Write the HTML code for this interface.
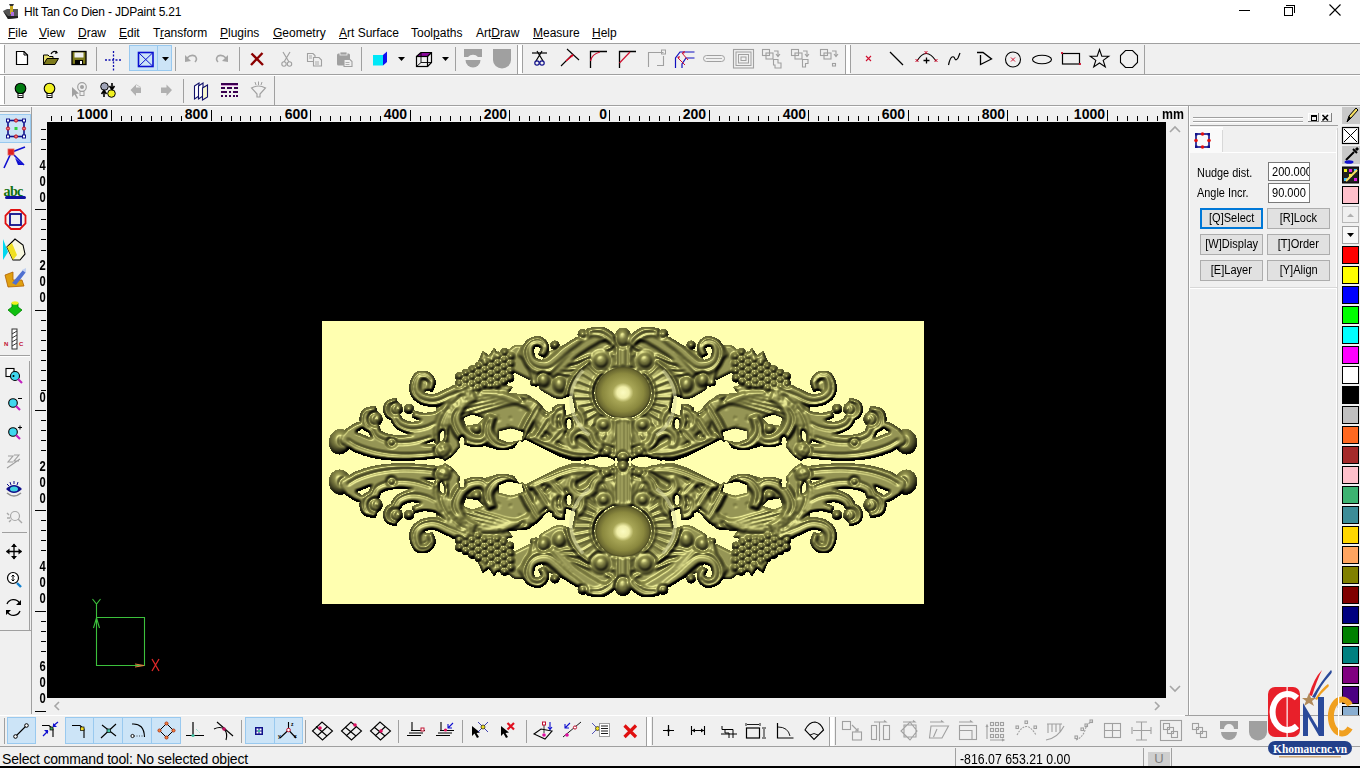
<!DOCTYPE html>
<html><head><meta charset="utf-8">
<style>
*{margin:0;padding:0;box-sizing:border-box}
html,body{width:1360px;height:768px;overflow:hidden;background:#f0f0f0;font-family:"Liberation Sans",sans-serif;font-size:12px;color:#000;position:relative}
.a{position:absolute}
#menu span{position:absolute;top:4px;font-size:12px;line-height:14px;color:#000}
#menu u{text-decoration:underline}
.hi{position:absolute;background:#cce4f7;border:1px solid #99c9ef}
.vs{position:absolute;width:1px;background:#a0a0a0}
.hl{position:absolute;height:1px;background:#a0a0a0}
.wl{position:absolute;height:1px;background:#fff}
svg{position:absolute;overflow:visible}
.rl{position:absolute;font-weight:bold;font-size:14px;line-height:14px;font-family:"Liberation Sans",sans-serif}
.btn{position:absolute;background:#e1e1e1;border:1px solid #adadad;font-size:12px;text-align:center;line-height:18px;color:#000}
.sw{position:absolute;left:1342px;width:17px;height:18px;border:1px solid #000}
</style></head><body>
<!-- title -->
<div class="a" style="left:0;top:0;width:1360px;height:43px;background:#fff"></div>
<svg style="left:2px;top:3px" width="17" height="17" viewBox="0 0 17 17">
 <path d="M1 8 L5 6 L16 6 L16 15 L6 16 Z" fill="#555"/>
 <path d="M1 8 L6 13 L16 13 L16 15 L6 16 Z" fill="#222"/>
 <rect x="8" y="1" width="3" height="10" fill="#c8a820"/>
 <path d="M7 1 L12 1 L11 3 L8 3Z" fill="#333"/>
 <rect x="9" y="9" width="3" height="4" fill="#b070e0"/>
</svg>
<div class="a" style="left:24px;top:5px;font-size:12px;line-height:14px;color:#000;letter-spacing:-0.2px;white-space:nowrap">Hlt Tan Co Dien - JDPaint 5.21</div>
<div class="a" style="left:1239px;top:10px;width:11px;height:1px;background:#000"></div>
<div class="a" style="left:1286px;top:5px;width:9px;height:8px;border:1px solid #000;border-left:none;border-bottom:none"></div>
<div class="a" style="left:1284px;top:7px;width:9px;height:9px;border:1px solid #000;background:#fff"></div>
<svg style="left:1329px;top:4px" width="12" height="12"><path d="M0.5 0.5L11.5 11.5M11.5 0.5L0.5 11.5" stroke="#000" stroke-width="1.1"/></svg>
<div id="menu" class="a" style="left:0;top:22px;width:1360px;height:21px">
  <span style="left:8px"><u>F</u>ile</span>
  <span style="left:39px"><u>V</u>iew</span>
  <span style="left:78px"><u>D</u>raw</span>
  <span style="left:119px"><u>E</u>dit</span>
  <span style="left:153px">T<u>r</u>ansform</span>
  <span style="left:220px"><u>P</u>lugins</span>
  <span style="left:273px"><u>G</u>eometry</span>
  <span style="left:339px"><u>A</u>rt Surface</span>
  <span style="left:411px">Tool<u>p</u>aths</span>
  <span style="left:476px">Art<u>D</u>raw</span>
  <span style="left:533px"><u>M</u>easure</span>
  <span style="left:592px"><u>H</u>elp</span>
</div>
<div class="hl" style="left:0;top:43px;width:1360px"></div>
<!-- toolbar row borders -->
<div class="hl" style="left:0;top:74px;width:1360px"></div>
<div class="wl" style="left:0;top:75px;width:1360px"></div>
<div class="hl" style="left:0;top:105px;width:1188px"></div>
<div class="hl" style="left:1188px;top:105px;width:172px"></div>
<div class="wl" style="left:0;top:106px;width:1188px"></div>
<!-- toolbar grippers -->
<div class="a" style="left:0;top:44px;width:4px;height:30px;background:#fff"></div>
<div class="vs" style="left:4px;top:45px;height:28px"></div>
<div class="a" style="left:0;top:76px;width:4px;height:29px;background:#fff"></div>
<div class="vs" style="left:4px;top:76px;height:28px"></div>
<!-- canvas area -->
<div class="a" style="left:47px;top:122px;width:1119px;height:576px;background:#000"></div>
<svg style="left:0;top:0" width="1360" height="768" viewBox="0 0 1360 768">
<g fill="none" stroke="#3cc03c" stroke-width="1.1">
<path d="M96.5 605 V665.5 H144.5 V617.5 H96.5"/>
<path d="M92.5 599 L96.5 604 L100.5 599 M96.5 604 V606"/>
<path d="M93.5 628 L96.5 618 L99.5 628"/>
</g>
<path d="M135 664 L144 665.5 L135 667" fill="none" stroke="#e08040" stroke-width="1"/>
<path d="M152 659 L159 671 M159 659 L152 671" stroke="#e02828" stroke-width="1.3"/>
</svg>
<!-- scrollbars -->
<div class="a" style="left:47px;top:698px;width:1136px;height:17px;background:#f0f0f0"></div>
<svg style="left:52px;top:701px" width="10" height="10"><path d="M7 1 L3 5 L7 9" stroke="#a6a6a6" stroke-width="1.6" fill="none"/></svg>
<svg style="left:1152px;top:701px" width="10" height="10"><path d="M3 1 L7 5 L3 9" stroke="#a6a6a6" stroke-width="1.6" fill="none"/></svg>
<svg style="left:1169px;top:125px" width="12" height="10"><path d="M1 7 L6 2 L11 7" stroke="#a6a6a6" stroke-width="1.6" fill="none"/></svg>
<svg style="left:1169px;top:683px" width="12" height="10"><path d="M1 3 L6 8 L11 3" stroke="#a6a6a6" stroke-width="1.6" fill="none"/></svg>
<!-- left toolbar frame -->
<div class="vs" style="left:31px;top:107px;height:607px"></div>
<div class="vs" style="left:29px;top:361px;height:269px"></div>
<div class="hl" style="left:0;top:111px;width:30px"></div>
<div class="hl" style="left:0;top:355px;width:30px"></div>
<div class="wl" style="left:0;top:356px;width:30px"></div>
<div class="hl" style="left:0;top:630px;width:31px"></div>
<!-- bottom toolbar borders -->
<div class="wl" style="left:0;top:715px;width:1360px"></div>
<div class="hl" style="left:0;top:746px;width:1360px"></div>
<div class="vs" style="left:4px;top:718px;height:26px"></div>
<!-- status bar -->
<div class="a" style="left:2px;top:751px;font-size:14px;line-height:16px;letter-spacing:-0.2px;white-space:nowrap">Select command tool: No selected object</div>
<div class="vs" style="left:955px;top:748px;height:18px"></div>
<div class="a" style="left:960px;top:751px;font-size:14px;line-height:16px;white-space:nowrap;transform:scaleX(0.88);transform-origin:0 0">-816.07 653.21 0.00</div>
<div class="vs" style="left:1143px;top:748px;height:18px"></div>
<div class="a" style="left:1148px;top:752px;width:22px;height:14px;background:#cfcfcf;color:#808080;font-size:13px;line-height:14px;text-align:center">U</div>
<div class="vs" style="left:1171px;top:748px;height:18px"></div>
<div class="a" style="left:0;top:766px;width:1360px;height:2px;background:#000"></div>
<div class="a" style="left:51px;top:116px;width:1px;height:5px;background:#000"></div>
<div class="a" style="left:61px;top:116px;width:1px;height:5px;background:#000"></div>
<div class="a" style="left:71px;top:116px;width:1px;height:5px;background:#000"></div>
<div class="a" style="left:111px;top:110px;width:1px;height:11px;background:#000"></div>
<div class="a" style="left:121px;top:116px;width:1px;height:5px;background:#000"></div>
<div class="a" style="left:131px;top:116px;width:1px;height:5px;background:#000"></div>
<div class="a" style="left:141px;top:116px;width:1px;height:5px;background:#000"></div>
<div class="a" style="left:151px;top:116px;width:1px;height:5px;background:#000"></div>
<div class="a" style="left:161px;top:116px;width:1px;height:5px;background:#000"></div>
<div class="a" style="left:171px;top:116px;width:1px;height:5px;background:#000"></div>
<div class="a" style="left:181px;top:116px;width:1px;height:5px;background:#000"></div>
<div class="a" style="left:211px;top:110px;width:1px;height:11px;background:#000"></div>
<div class="a" style="left:221px;top:116px;width:1px;height:5px;background:#000"></div>
<div class="a" style="left:231px;top:116px;width:1px;height:5px;background:#000"></div>
<div class="a" style="left:240px;top:116px;width:1px;height:5px;background:#000"></div>
<div class="a" style="left:250px;top:116px;width:1px;height:5px;background:#000"></div>
<div class="a" style="left:260px;top:116px;width:1px;height:5px;background:#000"></div>
<div class="a" style="left:270px;top:116px;width:1px;height:5px;background:#000"></div>
<div class="a" style="left:280px;top:116px;width:1px;height:5px;background:#000"></div>
<div class="a" style="left:310px;top:110px;width:1px;height:11px;background:#000"></div>
<div class="a" style="left:320px;top:116px;width:1px;height:5px;background:#000"></div>
<div class="a" style="left:330px;top:116px;width:1px;height:5px;background:#000"></div>
<div class="a" style="left:340px;top:116px;width:1px;height:5px;background:#000"></div>
<div class="a" style="left:350px;top:116px;width:1px;height:5px;background:#000"></div>
<div class="a" style="left:360px;top:116px;width:1px;height:5px;background:#000"></div>
<div class="a" style="left:370px;top:116px;width:1px;height:5px;background:#000"></div>
<div class="a" style="left:380px;top:116px;width:1px;height:5px;background:#000"></div>
<div class="a" style="left:410px;top:110px;width:1px;height:11px;background:#000"></div>
<div class="a" style="left:420px;top:116px;width:1px;height:5px;background:#000"></div>
<div class="a" style="left:430px;top:116px;width:1px;height:5px;background:#000"></div>
<div class="a" style="left:440px;top:116px;width:1px;height:5px;background:#000"></div>
<div class="a" style="left:450px;top:116px;width:1px;height:5px;background:#000"></div>
<div class="a" style="left:460px;top:116px;width:1px;height:5px;background:#000"></div>
<div class="a" style="left:470px;top:116px;width:1px;height:5px;background:#000"></div>
<div class="a" style="left:480px;top:116px;width:1px;height:5px;background:#000"></div>
<div class="a" style="left:509px;top:110px;width:1px;height:11px;background:#000"></div>
<div class="a" style="left:519px;top:116px;width:1px;height:5px;background:#000"></div>
<div class="a" style="left:529px;top:116px;width:1px;height:5px;background:#000"></div>
<div class="a" style="left:539px;top:116px;width:1px;height:5px;background:#000"></div>
<div class="a" style="left:549px;top:116px;width:1px;height:5px;background:#000"></div>
<div class="a" style="left:559px;top:116px;width:1px;height:5px;background:#000"></div>
<div class="a" style="left:569px;top:116px;width:1px;height:5px;background:#000"></div>
<div class="a" style="left:579px;top:116px;width:1px;height:5px;background:#000"></div>
<div class="a" style="left:589px;top:116px;width:1px;height:5px;background:#000"></div>
<div class="a" style="left:609px;top:110px;width:1px;height:11px;background:#000"></div>
<div class="a" style="left:619px;top:116px;width:1px;height:5px;background:#000"></div>
<div class="a" style="left:629px;top:116px;width:1px;height:5px;background:#000"></div>
<div class="a" style="left:639px;top:116px;width:1px;height:5px;background:#000"></div>
<div class="a" style="left:649px;top:116px;width:1px;height:5px;background:#000"></div>
<div class="a" style="left:659px;top:116px;width:1px;height:5px;background:#000"></div>
<div class="a" style="left:669px;top:116px;width:1px;height:5px;background:#000"></div>
<div class="a" style="left:679px;top:116px;width:1px;height:5px;background:#000"></div>
<div class="a" style="left:709px;top:110px;width:1px;height:11px;background:#000"></div>
<div class="a" style="left:719px;top:116px;width:1px;height:5px;background:#000"></div>
<div class="a" style="left:729px;top:116px;width:1px;height:5px;background:#000"></div>
<div class="a" style="left:738px;top:116px;width:1px;height:5px;background:#000"></div>
<div class="a" style="left:748px;top:116px;width:1px;height:5px;background:#000"></div>
<div class="a" style="left:758px;top:116px;width:1px;height:5px;background:#000"></div>
<div class="a" style="left:768px;top:116px;width:1px;height:5px;background:#000"></div>
<div class="a" style="left:778px;top:116px;width:1px;height:5px;background:#000"></div>
<div class="a" style="left:808px;top:110px;width:1px;height:11px;background:#000"></div>
<div class="a" style="left:818px;top:116px;width:1px;height:5px;background:#000"></div>
<div class="a" style="left:828px;top:116px;width:1px;height:5px;background:#000"></div>
<div class="a" style="left:838px;top:116px;width:1px;height:5px;background:#000"></div>
<div class="a" style="left:848px;top:116px;width:1px;height:5px;background:#000"></div>
<div class="a" style="left:858px;top:116px;width:1px;height:5px;background:#000"></div>
<div class="a" style="left:868px;top:116px;width:1px;height:5px;background:#000"></div>
<div class="a" style="left:878px;top:116px;width:1px;height:5px;background:#000"></div>
<div class="a" style="left:908px;top:110px;width:1px;height:11px;background:#000"></div>
<div class="a" style="left:918px;top:116px;width:1px;height:5px;background:#000"></div>
<div class="a" style="left:928px;top:116px;width:1px;height:5px;background:#000"></div>
<div class="a" style="left:938px;top:116px;width:1px;height:5px;background:#000"></div>
<div class="a" style="left:948px;top:116px;width:1px;height:5px;background:#000"></div>
<div class="a" style="left:958px;top:116px;width:1px;height:5px;background:#000"></div>
<div class="a" style="left:968px;top:116px;width:1px;height:5px;background:#000"></div>
<div class="a" style="left:978px;top:116px;width:1px;height:5px;background:#000"></div>
<div class="a" style="left:1007px;top:110px;width:1px;height:11px;background:#000"></div>
<div class="a" style="left:1017px;top:116px;width:1px;height:5px;background:#000"></div>
<div class="a" style="left:1027px;top:116px;width:1px;height:5px;background:#000"></div>
<div class="a" style="left:1037px;top:116px;width:1px;height:5px;background:#000"></div>
<div class="a" style="left:1047px;top:116px;width:1px;height:5px;background:#000"></div>
<div class="a" style="left:1057px;top:116px;width:1px;height:5px;background:#000"></div>
<div class="a" style="left:1067px;top:116px;width:1px;height:5px;background:#000"></div>
<div class="a" style="left:1107px;top:110px;width:1px;height:11px;background:#000"></div>
<div class="a" style="left:1117px;top:116px;width:1px;height:5px;background:#000"></div>
<div class="a" style="left:1127px;top:116px;width:1px;height:5px;background:#000"></div>
<div class="a" style="left:1137px;top:116px;width:1px;height:5px;background:#000"></div>
<div class="a" style="left:1147px;top:116px;width:1px;height:5px;background:#000"></div>
<div class="a" style="left:1157px;top:116px;width:1px;height:5px;background:#000"></div>
<div class="rl" style="right:1252px;top:107px">1000</div>
<div class="rl" style="right:1152px;top:107px">800</div>
<div class="rl" style="right:1052px;top:107px">600</div>
<div class="rl" style="right:953px;top:107px">400</div>
<div class="rl" style="right:853px;top:107px">200</div>
<div class="rl" style="right:753px;top:107px">0</div>
<div class="rl" style="right:654px;top:107px">200</div>
<div class="rl" style="right:554px;top:107px">400</div>
<div class="rl" style="right:455px;top:107px">600</div>
<div class="rl" style="right:355px;top:107px">800</div>
<div class="rl" style="right:255px;top:107px">1000</div>
<div class="rl" style="left:1162px;top:107px;transform:scaleX(0.88);transform-origin:0 0">mm</div><div class="a" style="left:41px;top:129px;width:5px;height:1px;background:#000"></div>
<div class="a" style="left:41px;top:139px;width:5px;height:1px;background:#000"></div>
<div class="a" style="left:41px;top:149px;width:5px;height:1px;background:#000"></div>
<div class="a" style="left:35px;top:209px;width:11px;height:1px;background:#000"></div>
<div class="a" style="left:41px;top:219px;width:5px;height:1px;background:#000"></div>
<div class="a" style="left:41px;top:229px;width:5px;height:1px;background:#000"></div>
<div class="a" style="left:41px;top:239px;width:5px;height:1px;background:#000"></div>
<div class="a" style="left:41px;top:250px;width:5px;height:1px;background:#000"></div>
<div class="a" style="left:35px;top:310px;width:11px;height:1px;background:#000"></div>
<div class="a" style="left:41px;top:320px;width:5px;height:1px;background:#000"></div>
<div class="a" style="left:41px;top:330px;width:5px;height:1px;background:#000"></div>
<div class="a" style="left:41px;top:340px;width:5px;height:1px;background:#000"></div>
<div class="a" style="left:41px;top:350px;width:5px;height:1px;background:#000"></div>
<div class="a" style="left:41px;top:360px;width:5px;height:1px;background:#000"></div>
<div class="a" style="left:41px;top:370px;width:5px;height:1px;background:#000"></div>
<div class="a" style="left:41px;top:380px;width:5px;height:1px;background:#000"></div>
<div class="a" style="left:41px;top:390px;width:5px;height:1px;background:#000"></div>
<div class="a" style="left:35px;top:410px;width:11px;height:1px;background:#000"></div>
<div class="a" style="left:41px;top:420px;width:5px;height:1px;background:#000"></div>
<div class="a" style="left:41px;top:430px;width:5px;height:1px;background:#000"></div>
<div class="a" style="left:41px;top:440px;width:5px;height:1px;background:#000"></div>
<div class="a" style="left:41px;top:450px;width:5px;height:1px;background:#000"></div>
<div class="a" style="left:35px;top:510px;width:11px;height:1px;background:#000"></div>
<div class="a" style="left:41px;top:520px;width:5px;height:1px;background:#000"></div>
<div class="a" style="left:41px;top:530px;width:5px;height:1px;background:#000"></div>
<div class="a" style="left:41px;top:540px;width:5px;height:1px;background:#000"></div>
<div class="a" style="left:41px;top:550px;width:5px;height:1px;background:#000"></div>
<div class="a" style="left:35px;top:611px;width:11px;height:1px;background:#000"></div>
<div class="a" style="left:41px;top:621px;width:5px;height:1px;background:#000"></div>
<div class="a" style="left:41px;top:631px;width:5px;height:1px;background:#000"></div>
<div class="a" style="left:41px;top:641px;width:5px;height:1px;background:#000"></div>
<div class="a" style="left:41px;top:651px;width:5px;height:1px;background:#000"></div>
<div class="a" style="left:35px;top:711px;width:11px;height:1px;background:#000"></div>
<div class="rl" style="left:38px;top:158px;transform:scaleX(0.8);transform-origin:7.5px 0">4</div>
<div class="rl" style="left:38px;top:174px;transform:scaleX(0.8);transform-origin:7.5px 0">0</div>
<div class="rl" style="left:38px;top:190px;transform:scaleX(0.8);transform-origin:7.5px 0">0</div>
<div class="rl" style="left:38px;top:258px;transform:scaleX(0.8);transform-origin:7.5px 0">2</div>
<div class="rl" style="left:38px;top:274px;transform:scaleX(0.8);transform-origin:7.5px 0">0</div>
<div class="rl" style="left:38px;top:290px;transform:scaleX(0.8);transform-origin:7.5px 0">0</div>
<div class="rl" style="left:38px;top:390px;transform:scaleX(0.8);transform-origin:7.5px 0">0</div>
<div class="rl" style="left:38px;top:459px;transform:scaleX(0.8);transform-origin:7.5px 0">2</div>
<div class="rl" style="left:38px;top:475px;transform:scaleX(0.8);transform-origin:7.5px 0">0</div>
<div class="rl" style="left:38px;top:491px;transform:scaleX(0.8);transform-origin:7.5px 0">0</div>
<div class="rl" style="left:38px;top:559px;transform:scaleX(0.8);transform-origin:7.5px 0">4</div>
<div class="rl" style="left:38px;top:575px;transform:scaleX(0.8);transform-origin:7.5px 0">0</div>
<div class="rl" style="left:38px;top:591px;transform:scaleX(0.8);transform-origin:7.5px 0">0</div>
<div class="rl" style="left:38px;top:659px;transform:scaleX(0.8);transform-origin:7.5px 0">6</div>
<div class="rl" style="left:38px;top:675px;transform:scaleX(0.8);transform-origin:7.5px 0">0</div>
<div class="rl" style="left:38px;top:691px;transform:scaleX(0.8);transform-origin:7.5px 0">0</div><svg style="left:0;top:0" width="1360" height="768" viewBox="0 0 1360 768">
<g shape-rendering="crispEdges">
<!-- separators -->
<rect x="96" y="47" width="1" height="24" fill="#a0a0a0"/>
<rect x="175" y="47" width="1" height="24" fill="#a0a0a0"/>
<rect x="239" y="47" width="1" height="24" fill="#a0a0a0"/>
<rect x="361" y="47" width="1" height="24" fill="#a0a0a0"/>
<rect x="455" y="47" width="1" height="24" fill="#a0a0a0"/>
<rect x="517" y="45" width="1" height="29" fill="#a0a0a0"/>
<rect x="518" y="45" width="4" height="29" fill="#fff"/>
<rect x="522" y="45" width="1" height="28" fill="#a0a0a0"/>
<rect x="845" y="45" width="1" height="29" fill="#a0a0a0"/>
<rect x="846" y="45" width="4" height="29" fill="#fff"/>
<rect x="850" y="45" width="1" height="28" fill="#a0a0a0"/>
<rect x="1144" y="45" width="1" height="29" fill="#a0a0a0"/>
<!-- highlighted button -->
<rect x="129" y="45" width="43" height="26" fill="#cce4f7"/>
<rect x="129.5" y="45.5" width="42" height="25" fill="none" stroke="#99c9ef"/>
<rect x="157" y="46" width="1" height="24" fill="#99c9ef"/>
</g>
<!-- new -->
<path d="M16.5 51.5 H24 L27.5 55 V64.5 H16.5 Z" fill="#fff" stroke="#000" stroke-width="1.2"/>
<path d="M24 51.5 V55 H27.5" fill="none" stroke="#000" stroke-width="1"/>
<!-- open -->
<path d="M43.5 55 H48 L49.5 56.5 H53 V64.5 H43.5 Z" fill="#e8e070" stroke="#000" stroke-width="1"/>
<path d="M43.5 64.5 L47 58.5 H58.5 L55 64.5 Z" fill="#7d7a1c" stroke="#000" stroke-width="1"/>
<path d="M51 54 Q53 50 57 52" fill="none" stroke="#000" stroke-width="1.2"/>
<path d="M56 50.5 L58 53 L55 54" fill="#000"/>
<!-- save -->
<rect x="72" y="51.5" width="14" height="13" fill="#7d7a1c" stroke="#000" stroke-width="1.3"/>
<rect x="74.5" y="52.5" width="9" height="5" fill="#f0f0f0"/>
<rect x="75" y="60" width="8" height="4.5" fill="#000"/>
<rect x="80" y="61" width="2" height="3" fill="#fff"/>
<!-- crosshair -->
<g stroke="#1010b0" stroke-width="1.3" stroke-dasharray="2 1.5">
<line x1="105" y1="60" x2="122" y2="60"/><line x1="113.5" y1="51" x2="113.5" y2="71"/></g>
<!-- box icon -->
<rect x="138.5" y="52.5" width="14.5" height="14" fill="none" stroke="#0a10d0" stroke-width="1.6"/>
<path d="M139 53 L152.5 66 M152.5 53 L139 66" stroke="#0a10d0" stroke-width="1"/>
<path d="M162 57 H169 L165.5 61 Z" fill="#000"/>
<!-- undo redo -->
<path d="M187 58 Q191 54 195 56 Q198 59 195 62" fill="none" stroke="#a6a6a6" stroke-width="1.6"/>
<path d="M185 55 L185 62 L191 61 Z" fill="#a6a6a6"/>
<path d="M226 58 Q222 54 218 56 Q215 59 218 62" fill="none" stroke="#a6a6a6" stroke-width="1.6"/>
<path d="M228 55 L228 62 L222 61 Z" fill="#a6a6a6"/>
<!-- red X -->
<path d="M251.5 53.5 L263 65 M262.5 53 L251 65" stroke="#8b0000" stroke-width="2.4"/>
<!-- scissors -->
<path d="M283 52 L289 62 M290 52 L284 62" stroke="#a0a0a0" stroke-width="1.2" fill="none"/>
<circle cx="284" cy="64" r="2.2" fill="none" stroke="#a0a0a0" stroke-width="1.1"/>
<circle cx="289.5" cy="64" r="2.2" fill="none" stroke="#a0a0a0" stroke-width="1.1"/>
<!-- copy -->
<path d="M307.5 53.5 H313 L315 55.5 V61.5 H307.5 Z" fill="#f0f0f0" stroke="#a0a0a0" stroke-width="1.1"/>
<path d="M313.5 57.5 H319 L321.5 60 V66 H313.5 Z" fill="#f0f0f0" stroke="#a0a0a0" stroke-width="1.1"/>
<path d="M309 56 H312 M309 58 H312 M315 62 H319 M315 64 H319" stroke="#a0a0a0" stroke-width="0.9"/>
<!-- paste -->
<rect x="337" y="53.5" width="13" height="12" rx="1.5" fill="#a0a0a0"/>
<rect x="340" y="52" width="7" height="3" fill="#a0a0a0" stroke="#f0f0f0" stroke-width="0.8"/>
<path d="M344 59.5 H350 L352 61.5 V66.5 H344 Z" fill="#f0f0f0" stroke="#a0a0a0" stroke-width="1.1"/>
<path d="M345.5 62.5 H349.5 M345.5 64.5 H349.5" stroke="#a0a0a0" stroke-width="0.8"/>
<!-- cube -->
<rect x="373" y="55" width="10" height="10.5" fill="#00e8f8"/>
<path d="M383 55 L387 51.5 V62 L383 65.5 Z" fill="#1010f0"/>
<path d="M398 57 H405 L401.5 61 Z" fill="#000"/>
<!-- wire cube -->
<path d="M416.5 56.5 L421 52.5 H431.5 L427.5 56.5 Z" fill="#8a0a9a"/>
<g fill="none" stroke="#000" stroke-width="1.2">
<rect x="416.5" y="56.5" width="11" height="10"/>
<path d="M421 52.5 H431.5 V62.5 L427.5 66.5 M416.5 56.5 L421 52.5 M427.5 56.5 L431.5 52.5"/>
</g>
<path d="M421 52.5 V62.5 H431.5 M421 62.5 L416.5 66.5" fill="none" stroke="#000" stroke-width="0.9"/>
<path d="M442 57 H449 L445.5 61 Z" fill="#000"/>
<!-- gray shapes -->
<path d="M464 49 H482 V57 H478 A6.5 6.5 0 0 0 468 57 H464 Z" fill="#a0a0a0"/>
<path d="M465.5 60 H480.5 A7.5 7.5 0 0 1 465.5 60 Z" fill="#a0a0a0"/>
<path d="M493 49 H511 V60 A9 8.5 0 0 1 493 60 Z" fill="#a0a0a0"/>
<!-- cut scissors -->
<path d="M532 53 H547" stroke="#000" stroke-width="1.2"/>
<path d="M537 51 L543 61 M542 51 L536 61" stroke="#000" stroke-width="1.2"/>
<circle cx="537" cy="63" r="2.2" fill="none" stroke="#10108a" stroke-width="1.2"/>
<circle cx="542" cy="63" r="2.2" fill="none" stroke="#10108a" stroke-width="1.2"/>
<!-- extend -->
<path d="M567 49 L579 60" stroke="#000" stroke-width="1.1"/>
<path d="M561 66 L572 55" stroke="#000" stroke-width="1.1"/>
<path d="M566 61 L573 55" stroke="#e00020" stroke-width="1.2"/>
<path d="M570.5 55.5 L573.5 54 L572 57.5 Z" fill="#e00020"/>
<!-- fillet -->
<path d="M590.5 68 V51.5 H607" fill="none" stroke="#000" stroke-width="1.3"/>
<path d="M590.5 61 Q592 54 600 52" fill="none" stroke="#d01030" stroke-width="1.2"/>
<!-- chamfer -->
<path d="M619.5 68 V51.5 H636" fill="none" stroke="#000" stroke-width="1.3"/>
<path d="M619.5 63 L630 52" fill="none" stroke="#d01030" stroke-width="1.2"/>
<!-- gray rect -->
<path d="M648.5 67 V52.5 H663.5 M663.5 56 V65.5 H657" fill="none" stroke="#a0a0a0" stroke-width="1.1"/>
<rect x="661.5" y="50" width="4" height="4" fill="none" stroke="#a0a0a0" stroke-width="1"/>
<!-- offset -->
<path d="M675.5 68 V58 L680 52 H694.5" fill="none" stroke="#1010c0" stroke-width="1.2"/>
<path d="M682 68 V64 L686 58 H694.5" fill="none" stroke="#1010c0" stroke-width="1.2"/>
<path d="M678 58 L685 65 M682 53 L688 60" stroke="#d01030" stroke-width="1"/>
<path d="M677 57 L680 56 L679 59 Z M682 52 L685 51 L684 54 Z" fill="#d01030"/>
<!-- slot -->
<rect x="703.5" y="55.5" width="21" height="6" rx="3" fill="none" stroke="#a0a0a0" stroke-width="1"/>
<path d="M706 58.5 H722" stroke="#a0a0a0" stroke-width="0.8"/>
<!-- nested rect -->
<rect x="733.5" y="49.5" width="20" height="18.5" fill="none" stroke="#a0a0a0" stroke-width="1.1"/>
<rect x="736" y="52" width="15" height="13.5" fill="none" stroke="#a0a0a0" stroke-width="1"/>
<rect x="738.5" y="54.5" width="10" height="8.5" fill="none" stroke="#a0a0a0" stroke-width="1"/>
<rect x="741" y="57" width="5" height="3.5" fill="none" stroke="#a0a0a0" stroke-width="1"/>
<!-- bool icons -->
<g fill="none" stroke="#a0a0a0" stroke-width="1.1">
<rect x="762.5" y="49.5" width="7" height="6"/><rect x="766" y="53" width="7" height="6"/>
<path d="M774 51 H778 V56 M776 54 L778 56.5 L780 54"/>
<path d="M773.5 59.5 H778 V63 H781 V68 H775 V65 H773.5Z"/>
<rect x="791.5" y="49.5" width="7" height="6"/><rect x="795" y="53" width="7" height="6"/>
<path d="M803 51 H807 V56 M805 54 L807 56.5 L809 54"/>
<path d="M802.5 59.5 H808 V63.5 H805.5 V67 H802.5Z"/>
<rect x="820.5" y="49.5" width="7" height="6"/><rect x="824" y="53" width="7" height="6"/>
<path d="M832 51 H836 V56 M834 54 L836 56.5 L838 54"/>
<rect x="832.5" y="63.5" width="3" height="2.5"/>
</g>
<!-- point -->
<path d="M866 56 L871 61 M871 56 L866 61" stroke="#d01030" stroke-width="1.1"/>
<!-- line -->
<path d="M890 52 L903 65" stroke="#000" stroke-width="1.2"/>
<!-- arc -->
<path d="M917 61 Q926 46 936 61" fill="none" stroke="#000" stroke-width="1.2"/>
<path d="M915.5 59 L918.5 62 M918.5 59 L915.5 62 M934.5 59 L937.5 62 M937.5 59 L934.5 62 M924.5 51 L927.5 54 M927.5 51 L924.5 54" stroke="#d01030" stroke-width="1"/>
<path d="M923.5 60.5 H929.5 M926.5 57.5 V63.5" stroke="#000" stroke-width="1.3"/>
<!-- spline -->
<path d="M948.5 65 Q950 58 952 57 Q954 56 955 59 Q956 61 958 58 L960 53" fill="none" stroke="#000" stroke-width="1.2"/>
<!-- polyline -->
<path d="M977 52.5 H983 L991.5 59 L980.5 64.5 V55" fill="none" stroke="#000" stroke-width="1.3"/>
<!-- circle -->
<circle cx="1013" cy="59.5" r="7.5" fill="none" stroke="#000" stroke-width="1.1"/>
<path d="M1011 57.5 L1015 61.5 M1015 57.5 L1011 61.5" stroke="#d01030" stroke-width="1"/>
<!-- ellipse -->
<ellipse cx="1042" cy="59.5" rx="9.5" ry="4.2" fill="none" stroke="#000" stroke-width="1.1"/>
<!-- rect -->
<rect x="1062.5" y="53.5" width="17" height="10.5" fill="none" stroke="#000" stroke-width="1.2"/>
<path d="M1061 52 L1063 54 M1063 52 L1061 54 M1079 63 L1081 65 M1081 63 L1079 65" stroke="#d01030" stroke-width="0.9"/>
<!-- star -->
<path d="M1099.5 49.5 L1101.8 56.2 L1108.8 56.2 L1103.2 60.4 L1105.3 67 L1099.5 63 L1093.7 67 L1095.8 60.4 L1090.2 56.2 L1097.2 56.2 Z" fill="none" stroke="#000" stroke-width="1.1"/>
<!-- octagon -->
<path d="M1125.5 50.5 H1132.5 L1137.5 55.5 V62.5 L1132.5 67.5 H1125.5 L1120.5 62.5 V55.5 Z" fill="none" stroke="#000" stroke-width="1.1"/>
</svg>
<svg style="left:0;top:0" width="1360" height="768" viewBox="0 0 1360 768">
<g shape-rendering="crispEdges">
<rect x="183" y="79" width="1" height="24" fill="#a0a0a0"/>
<rect x="274" y="76" width="1" height="29" fill="#a0a0a0"/>
</g>
<!-- green bulb -->
<circle cx="20.5" cy="88.5" r="5.3" fill="#007a10" stroke="#000" stroke-width="1.1"/>
<rect x="18" y="93.5" width="5" height="4" fill="#fff" stroke="#000" stroke-width="1"/>
<path d="M18.5 95.5 H22.5" stroke="#000" stroke-width="0.8"/>
<!-- yellow bulb -->
<circle cx="49.5" cy="88.5" r="5.3" fill="#f0f020" stroke="#000" stroke-width="1.1"/>
<rect x="47" y="93.5" width="5" height="4" fill="#fff" stroke="#000" stroke-width="1"/>
<path d="M47.5 95.5 H51.5" stroke="#000" stroke-width="0.8"/>
<!-- gray bulb cursor -->
<circle cx="82" cy="87" r="4.3" fill="#f0f0f0" stroke="#a0a0a0" stroke-width="1.2"/>
<circle cx="82" cy="87" r="2" fill="#a0a0a0"/>
<rect x="80" y="91.5" width="4" height="4" fill="#f0f0f0" stroke="#a0a0a0" stroke-width="1"/>
<path d="M72 87 L72 97 L74.5 94.5 L77 99 L78 98 L76 94 L79 93.5 Z" fill="#a0a0a0"/>
<!-- swap -->
<circle cx="104.5" cy="86.5" r="3.8" fill="#a0a4b8" stroke="#000" stroke-width="1"/>
<circle cx="111.5" cy="93.5" r="3.8" fill="#f0f020" stroke="#000" stroke-width="1"/>
<path d="M112 83 V88 M109.5 86 L112 89.5 L114.5 86" stroke="#000" stroke-width="1.6" fill="none"/>
<path d="M104 97 V92 M101.5 94 L104 90.5 L106.5 94" stroke="#000" stroke-width="1.6" fill="none"/>
<!-- arrow left gray -->
<path d="M130.5 90 L136 84.5 V87.5 H141 V93 H136 V96 Z" fill="#b0b0b0"/>
<path d="M136 84.5 L141 87.5" stroke="#c8c8c8"/>
<!-- arrow right gray -->
<path d="M172 90 L166.5 84.5 V87.5 H161 V93 H166.5 V96 Z" fill="#b0b0b0"/>
<!-- layers -->
<path d="M194.5 86 L199 83 V96 L194.5 99 Z" fill="#fff" stroke="#10106a" stroke-width="1.1"/>
<path d="M198.5 86 L203 83 V96 L198.5 99 Z" fill="#fff" stroke="#10106a" stroke-width="1.1"/>
<path d="M202.5 88 L207.5 85 V97 L202.5 100 Z" fill="#f8f8d0" stroke="#10106a" stroke-width="1.1"/>
<!-- linetypes -->
<g shape-rendering="crispEdges">
<rect x="221" y="83" width="17" height="2" fill="#3a0050"/>
<rect x="221" y="87" width="4" height="2" fill="#3a0050"/><rect x="227" y="87" width="5" height="2" fill="#3a0050"/><rect x="234" y="87" width="4" height="2" fill="#3a0050"/>
<rect x="221" y="91" width="6" height="2" fill="#3a0050"/><rect x="229" y="91" width="2" height="2" fill="#3a0050"/><rect x="233" y="91" width="5" height="2" fill="#3a0050"/>
<rect x="221" y="95" width="2" height="2" fill="#3a0050"/><rect x="225" y="95" width="2" height="2" fill="#3a0050"/><rect x="229" y="95" width="2" height="2" fill="#3a0050"/><rect x="233" y="95" width="2" height="2" fill="#3a0050"/><rect x="236" y="95" width="2" height="2" fill="#3a0050"/>
<rect x="221" y="85" width="17" height="1" fill="#c040c0" opacity="0.5"/>
</g>
<!-- funnel gray -->
<path d="M251.5 88 Q258.5 84 265.5 88 L260 94 V97 H257 V94 Z" fill="#f0f0f0" stroke="#a0a0a0" stroke-width="1.2"/>
<path d="M255 82 L256 85 M258.5 81.5 V85 M262 82 L261 85" stroke="#a0a0a0" stroke-width="1"/>
</svg>
<div class="a" style="left:0;top:114px;width:31px;height:29px;background:#cce4f7;border:1px solid #99c9ef;border-left:none"></div>
<svg style="left:0;top:0" width="1360" height="768" viewBox="0 0 1360 768">
<!-- select -->
<rect x="8" y="120.5" width="16" height="16" fill="none" stroke="#10108a" stroke-width="1.6"/>
<g fill="#fff" stroke="#10108a" stroke-width="1"><rect x="6.5" y="119" width="3" height="3"/><rect x="22.5" y="119" width="3" height="3"/><rect x="6.5" y="135" width="3" height="3"/><rect x="22.5" y="135" width="3" height="3"/></g>
<g fill="#f08080" stroke="#c01020" stroke-width="1"><circle cx="16" cy="120.5" r="1.6"/><circle cx="16" cy="136.5" r="1.6"/><circle cx="8" cy="128.5" r="1.6"/><circle cx="24" cy="128.5" r="1.6"/></g>
<rect x="14.5" y="127" width="3" height="3" fill="#30d040"/>
<!-- node edit -->
<path d="M4 168 L11 153 M12 152 L25 147 M14 155 L24 165" stroke="#1010d0" stroke-width="1.6" fill="none"/>
<path d="M15 158 L24 165 L18 165 Z" fill="#1010d0"/>
<rect x="8" y="149" width="6" height="6" fill="#e02020" stroke="#e06060" stroke-width="0.8"/>
<!-- abc -->
<text x="3.5" y="195.5" font-family="Liberation Serif" font-weight="bold" font-size="14" fill="#107010" letter-spacing="-0.6">abc</text>
<rect x="5" y="196" width="21" height="3" rx="1.5" fill="#1010a0"/>
<!-- octagon -->
<path d="M11 210 H20 L25.5 215.5 V223.5 L20 229 H11 L5.5 223.5 V215.5 Z" fill="none" stroke="#e01010" stroke-width="1.8"/>
<rect x="10" y="214" width="11" height="11" fill="none" stroke="#10108a" stroke-width="1.8"/>
<!-- surface -->
<path d="M3 239 L8 252 L3 260 Z" fill="#00d8f0"/>
<path d="M7 247 L15 239 L23 245 L25 254 L20 260 L13 260 Z" fill="#f8f8e0" stroke="#000" stroke-width="1.1"/>
<path d="M7 247 L12 243 L17 255 L13 260 Z" fill="#f0e020"/>
<!-- paint -->
<path d="M5 275 L13 272 L13 280 L22 280 L24 286 L8 287 Z" fill="#e0a010" stroke="#b06000" stroke-width="0.8"/>
<path d="M12 283 L23 270 L26 272 L16 285 Z" fill="#5070d0"/>
<path d="M22 270 L26 268 L26 273 Z" fill="#c0d0f0"/>
<!-- green -->
<path d="M8 310 L12 307 V303 H18 V307 L22 310 L15 316 Z" fill="#10c010" stroke="#008000" stroke-width="0.8"/>
<ellipse cx="15" cy="303" rx="3.5" ry="1.8" fill="#f0f020"/>
<!-- NC tool -->
<rect x="12" y="329" width="5" height="20" fill="#fff" stroke="#333" stroke-width="1"/>
<path d="M12 334 L17 331 M12 338 L17 335 M12 342 L17 339 M12 346 L17 343" stroke="#333" stroke-width="1"/>
<text x="4" y="346" font-family="Liberation Sans" font-weight="bold" font-size="6" fill="#c01030">N</text>
<text x="19" y="346" font-family="Liberation Sans" font-weight="bold" font-size="6" fill="#c01030">C</text>
<!-- zoom window -->
<rect x="6" y="368.5" width="8" height="8" fill="#fff" stroke="#000" stroke-width="1.1"/>
<circle cx="15" cy="376" r="4.5" fill="#40d8f0" stroke="#000" stroke-width="1.1"/>
<path d="M18 379 L22 383" stroke="#c020c0" stroke-width="2.2"/>
<circle cx="13.5" cy="376" r="1" fill="#000"/>
<!-- zoom - -->
<circle cx="13" cy="403" r="4.3" fill="#40d8f0" stroke="#000" stroke-width="1.1"/>
<path d="M16 406 L20 410" stroke="#c020c0" stroke-width="2.2"/>
<path d="M18 398.5 H22" stroke="#000" stroke-width="1"/>
<!-- zoom + -->
<circle cx="13" cy="432" r="4.3" fill="#40d8f0" stroke="#000" stroke-width="1.1"/>
<path d="M16 435 L20 439" stroke="#c020c0" stroke-width="2.2"/>
<path d="M18 427.5 H22 M20 425.5 V429.5" stroke="#000" stroke-width="1"/>
<!-- zz gray -->
<path d="M8 456 H13 L8 462 H13 M14 455 H19 L14 461 H19 M7 468 L20 459" stroke="#a0a0a0" stroke-width="1.1" fill="none"/>
<!-- eye -->
<path d="M6 489 Q14 481 22 489 Q14 497 6 489 Z" fill="#10108a"/>
<path d="M7 484 L9 486 M10 482 L11 485 M14 481 V484 M18 482 L17 485" stroke="#10108a" stroke-width="1"/>
<ellipse cx="14" cy="489" rx="4" ry="2.5" fill="#40d0e0"/>
<path d="M7 493 Q14 499 21 493" stroke="#909090" stroke-width="1.5" fill="none"/>
<!-- gray zoom -->
<circle cx="15" cy="516" r="4.5" fill="none" stroke="#a8a8a8" stroke-width="1.2"/>
<path d="M18 519 L22 523 M7 513 L9 515 M7 518 H10 M9 522 L11 520" stroke="#a8a8a8" stroke-width="1.4"/>
<!-- sep -->
<rect x="2" y="532" width="25" height="1" fill="#a0a0a0"/>
<!-- move -->
<path d="M14 544 V559 M6.5 551.5 H21.5" stroke="#000" stroke-width="1.3"/>
<path d="M14 543.5 L11 547 H17 Z M14 559.5 L11 556 H17 Z M6 551.5 L9.5 548.5 V554.5 Z M22 551.5 L18.5 548.5 V554.5 Z" fill="#000"/>
<!-- zoom circle -->
<circle cx="13" cy="578" r="5.5" fill="#fff" stroke="#000" stroke-width="1.2"/>
<path d="M13 575 V581 M11.5 576.5 L13 575 L14.5 576.5 M11.5 579.5 L13 581 L14.5 579.5" stroke="#000" stroke-width="1" fill="none"/>
<path d="M17 583 L21 587" stroke="#1080d0" stroke-width="2.4"/>
<!-- rotate -->
<path d="M7 604 A7 7 0 0 1 19.5 603 M20 611 A7 7 0 0 1 7.5 612" fill="none" stroke="#000" stroke-width="1.3"/>
<path d="M21 600 V605 H16 Z M6 615 V610 H11 Z" fill="#000"/>
</svg>
<svg style="left:0;top:0" width="1360" height="768" viewBox="0 0 1360 768">
<g shape-rendering="crispEdges">
<!-- highlighted groups -->
<rect x="7" y="717" width="29" height="27" fill="#cce4f7"/><rect x="7.5" y="717.5" width="28" height="26" fill="none" stroke="#99c9ef"/>
<rect x="65" y="717" width="116" height="27" fill="#cce4f7"/><rect x="65.5" y="717.5" width="115" height="26" fill="none" stroke="#99c9ef"/>
<rect x="93" y="718" width="1" height="25" fill="#99c9ef"/><rect x="122" y="718" width="1" height="25" fill="#99c9ef"/><rect x="151" y="718" width="1" height="25" fill="#99c9ef"/>
<rect x="245" y="717" width="58" height="27" fill="#cce4f7"/><rect x="245.5" y="717.5" width="57" height="26" fill="none" stroke="#99c9ef"/>
<rect x="274" y="718" width="1" height="25" fill="#99c9ef"/>
<!-- separators -->
<rect x="241" y="720" width="1" height="23" fill="#a0a0a0"/>
<rect x="305" y="720" width="1" height="23" fill="#a0a0a0"/>
<rect x="398" y="720" width="1" height="23" fill="#a0a0a0"/>
<rect x="462" y="720" width="1" height="23" fill="#a0a0a0"/>
<rect x="526" y="720" width="1" height="23" fill="#a0a0a0"/>
<rect x="646" y="717" width="1" height="29" fill="#a0a0a0"/><rect x="647" y="717" width="4" height="29" fill="#fff"/><rect x="652" y="717" width="1" height="28" fill="#a0a0a0"/>
<rect x="829" y="717" width="1" height="29" fill="#a0a0a0"/><rect x="830" y="717" width="4" height="29" fill="#fff"/><rect x="835" y="717" width="1" height="28" fill="#a0a0a0"/>
</g>
<!-- line w/ circles -->
<path d="M15.5 736.5 L26.5 725.5" stroke="#000" stroke-width="1.1"/>
<circle cx="15.5" cy="736.5" r="1.8" fill="#fff" stroke="#000" stroke-width="1"/>
<circle cx="26.5" cy="725.5" r="1.8" fill="#fff" stroke="#000" stroke-width="1"/>
<!-- snap arrows -->
<path d="M42 725.5 H49 L53 729 V737" stroke="#000" stroke-width="1.1" fill="none"/>
<rect x="50" y="727" width="3" height="3" fill="#40a060" stroke="#000" stroke-width="0.7"/>
<path d="M53 726 L58 722 M43 736 L48 731" stroke="#1010d0" stroke-width="1.3"/>
<path d="M53 723 V727 H57 Z M48 734 V730 H44 Z" fill="#1010d0" transform="translate(0,0)"/>
<!-- end snap -->
<path d="M72 725.5 H80 L84 729 V738" stroke="#000" stroke-width="1.1" fill="none"/>
<rect x="80.5" y="727" width="3.5" height="3.5" fill="#f8e020" stroke="#000" stroke-width="0.7"/>
<!-- intersect -->
<path d="M102 725 L116 736 M101 738 L116 724" stroke="#000" stroke-width="1.1"/>
<rect x="107" y="729" width="3.5" height="3.5" fill="#40c0a0" stroke="#000" stroke-width="0.7"/>
<!-- arc center -->
<path d="M132 724 Q144 723 144.5 737" stroke="#000" stroke-width="1.1" fill="none"/>
<circle cx="132.5" cy="736" r="1.6" fill="#fff" stroke="#000" stroke-width="0.9"/>
<path d="M134 736 H143" stroke="#000" stroke-width="0.7" stroke-dasharray="1 1.5"/>
<!-- quad -->
<path d="M166.5 723.5 L173.5 730.5 L166.5 737.5 L159.5 730.5 Z" fill="none" stroke="#000" stroke-width="1"/>
<g fill="#f08040" stroke="#a02000" stroke-width="0.7"><circle cx="166.5" cy="723.5" r="1.6"/><circle cx="173.5" cy="730.5" r="1.6"/><circle cx="166.5" cy="737.5" r="1.6"/><circle cx="159.5" cy="730.5" r="1.6"/></g>
<!-- perp -->
<path d="M186 735.5 H204 M193 722 V735" stroke="#000" stroke-width="1.2"/>
<path d="M196 729 L200 733" stroke="#40c0a0" stroke-width="0.7" stroke-dasharray="1 1"/>
<circle cx="193" cy="735.5" r="1.6" fill="#40c0a0"/>
<!-- tangent -->
<path d="M214 729 Q220 726 224 729 Q228 733 226 740" stroke="#000" stroke-width="1.1" fill="none"/>
<path d="M217 722 L233 736" stroke="#000" stroke-width="1.1"/>
<circle cx="224" cy="729" r="1.8" fill="#c01060"/>
<!-- grid snap -->
<rect x="255" y="727" width="8" height="8" fill="#10108a"/>
<g fill="#fff"><rect x="256.5" y="728.5" width="2" height="2"/><rect x="259.5" y="728.5" width="2" height="2"/><rect x="256.5" y="731.5" width="2" height="2"/><rect x="259.5" y="731.5" width="2" height="2"/></g>
<rect x="258" y="730" width="2" height="2" fill="#40c0a0"/>
<!-- axis -->
<path d="M288.5 730 V722 M288.5 730 L280 738 M288.5 730 L296 738" stroke="#000" stroke-width="1.1"/>
<circle cx="288.5" cy="730" r="1.8" fill="#fff" stroke="#c01030" stroke-width="1"/>
<text x="291" y="726" font-size="5" font-weight="bold" font-family="Liberation Sans">z</text>
<text x="278" y="738" font-size="5" font-weight="bold" font-family="Liberation Sans">y</text>
<text x="294" y="738" font-size="5" font-weight="bold" font-family="Liberation Sans">x</text>
<!-- diamonds -->
<g fill="none" stroke="#000" stroke-width="1.1">
<path d="M312.5 731 L322 722 L332.5 731 L322.5 740 Z M316 726.5 L327 736 M317 736 L327.5 726.5"/>
<path d="M341.5 731 L351 722 L361.5 731 L351.5 740 Z M345 727 L356 736 M346 736 L356.5 726.5"/>
<path d="M370.5 731 L380 722 L390.5 731 L380.5 740 Z M374 727 L385 736 M375 736 L385.5 726.5"/>
</g>
<circle cx="320" cy="728" r="1.8" fill="#e01060"/>
<circle cx="355" cy="725" r="1.8" fill="#e01060"/>
<circle cx="381" cy="731" r="1.8" fill="#e01060"/>
<!-- planes -->
<path d="M407 735.5 H421 M409 733 H423 M411 730.5 H425 M412 722 V730" stroke="#000" stroke-width="1.1"/>
<rect x="421" y="728" width="3" height="3" fill="#fff" stroke="#c01030" stroke-width="1"/>
<path d="M436 735.5 H450 M438 733 H452 M440 730.5 H454 M441 722 V730" stroke="#000" stroke-width="1.1"/>
<circle cx="445.5" cy="730" r="1.6" fill="#e01060"/>
<path d="M448 728 L453 723 M448 724 V728 H452" stroke="#1010d0" stroke-width="1.1" fill="none"/>
<!-- cursors -->
<path d="M472 726 V736 L474.5 733.5 L477 738 L479 737 L476.5 733 L480 732.5 Z" fill="#000"/>
<path d="M478 722 L488 732 M488 722 L478 732" stroke="#1010a0" stroke-width="0.8"/>
<circle cx="483" cy="727" r="2" fill="#f0e020" stroke="#000" stroke-width="0.6"/>
<path d="M501 726 V736 L503.5 733.5 L506 738 L508 737 L505.5 733 L509 732.5 Z" fill="#000"/>
<path d="M507.5 723 L514 729.5 M514 723 L507.5 729.5" stroke="#e01020" stroke-width="2.2"/>
<!-- plane pt -->
<path d="M534 734 L541 729 L552 731 L545 739 Z" fill="none" stroke="#000" stroke-width="1.1"/>
<circle cx="544" cy="735" r="1.8" fill="#e010a0"/>
<path d="M544 725 V733" stroke="#000" stroke-width="0.8"/>
<rect x="542.5" y="722" width="3" height="3" fill="#fff" stroke="#c01030" stroke-width="1"/>
<path d="M550 722 V729 M548 727 L550 729.5 L552 727" stroke="#1010d0" stroke-width="1.1" fill="none"/>
<!-- line pt -->
<path d="M563 737 L581 722" stroke="#000" stroke-width="0.9"/>
<circle cx="567" cy="735" r="1.8" fill="#e010a0"/>
<circle cx="575" cy="727.5" r="1.6" fill="#fff" stroke="#c01030" stroke-width="1"/>
<path d="M570 723 L565 728 M565 724 V728 H569" stroke="#1010d0" stroke-width="1.1" fill="none"/>
<!-- list -->
<path d="M592 723 L603 734 M603 723 L592 734" stroke="#1010a0" stroke-width="0.7"/>
<circle cx="597.5" cy="728.5" r="2" fill="#f0e020" stroke="#000" stroke-width="0.6"/>
<rect x="599.5" y="723.5" width="10" height="13" fill="#fff" stroke="#a0a0a0" stroke-width="1"/>
<path d="M601 726 H608 M601 728.5 H608 M601 731 H608 M601 733.5 H608" stroke="#000" stroke-width="0.9"/>
<!-- big red x -->
<path d="M624.5 725.5 L636 737 M636 725.5 L624.5 737" stroke="#e01010" stroke-width="3.2"/>
<!-- plus -->
<path d="M663 730.5 H674 M668.5 725 V736" stroke="#000" stroke-width="1.2"/>
<circle cx="668.5" cy="730.5" r="1.3" fill="#000"/>
<!-- dim -->
<path d="M691.5 726 V735 M704.5 726 V735 M692 730.5 H704" stroke="#000" stroke-width="1.1"/>
<path d="M692 730.5 L695 728.5 V732.5 Z M704 730.5 L701 728.5 V732.5 Z" fill="#000"/>
<!-- step -->
<path d="M722 726 V729.5 H733 V738 M725 729 V733 H729 V738 M721 734 H737" stroke="#000" stroke-width="1" fill="none"/>
<!-- box dim -->
<rect x="746.5" y="728" width="13" height="10" fill="none" stroke="#000" stroke-width="1.2"/>
<path d="M746 723 V726 M760 723 V726 M747 724.5 H759 M762 728 H766 M762 738 H766 M764 729 V737" stroke="#000" stroke-width="0.9"/>
<!-- angle -->
<path d="M777.5 723 V738 H793.5" stroke="#000" stroke-width="1.2" fill="none"/>
<path d="M778 727 Q788 727 790 736" stroke="#000" stroke-width="0.9" fill="none"/>
<!-- circle angle -->
<path d="M805 730 Q809 722 815 722 Q821 723 823.5 730 L814 739.5 Z" fill="none" stroke="#000" stroke-width="1.1"/>
<path d="M810 735 Q814 732 818 735" stroke="#000" stroke-width="0.9" fill="none"/>
<!-- gray transforms -->
<g fill="none" stroke="#a0a0a0" stroke-width="1.1">
<rect x="842.5" y="721.5" width="8" height="8"/><rect x="852.5" y="732" width="9" height="8"/><path d="M852 725 L858 731 M855 731 H858 V728"/>
<rect x="871.5" y="725.5" width="5" height="14"/><rect x="883.5" y="725.5" width="6" height="14"/><path d="M879.5 722 V741 M874 722 H886 L884 720.5"/>
<path d="M904 725 H916 V737 H904 Z M910 722 L917 731 L910 740 L901 731 Z"/><path d="M903 722 H915 L913 720.5"/>
<path d="M931 726 H948.5 L942 738 H929.5 Z M933.5 737 L937 729"/><path d="M930 722 H943 L941 720.5"/>
<rect x="959.5" y="725.5" width="17" height="14"/><path d="M959.5 730.5 H972 V739.5"/><path d="M959 722 H972 L970 720.5"/>
<path d="M987 739 V726 M986 727 L987 725 L988 727 M990 740 H1004 M1002 739 L1004 740 L1002 741"/>
<rect x="990.5" y="722.5" width="3" height="3"/><rect x="995.5" y="722.5" width="3" height="3"/><rect x="1000.5" y="722.5" width="3" height="3"/>
<rect x="990.5" y="728.5" width="3" height="3"/><rect x="995.5" y="728.5" width="3" height="3"/><rect x="1000.5" y="728.5" width="3" height="3"/>
<rect x="990.5" y="734.5" width="3" height="3"/><rect x="995.5" y="734.5" width="3" height="3"/><rect x="1000.5" y="734.5" width="3" height="3"/>
<path d="M1017 735 Q1026 718 1036 735" stroke-dasharray="2 1"/><rect x="1016" y="726" width="2.5" height="2.5"/><rect x="1025" y="721" width="2.5" height="2.5"/><rect x="1034" y="726" width="2.5" height="2.5"/>
<path d="M1047 724 H1062 M1048 724 V733 M1052 724 V732 M1056 724 V732 M1060 724 V732 M1046 740 Q1058 738 1064 726"/>
<path d="M1076 740 Q1083 737 1085 730 Q1087 723 1092 722" stroke-dasharray="2 1"/><rect x="1075" y="736" width="2.5" height="2.5"/><rect x="1081" y="728" width="2.5" height="2.5"/><rect x="1085" y="724" width="2.5" height="2.5"/><rect x="1090" y="720" width="2.5" height="2.5"/>
<rect x="1104.5" y="723.5" width="16" height="14"/><path d="M1112.5 724 V737 M1105 730.5 H1120"/>
<path d="M1132 727 V734 M1151 727 V734 M1141.5 722 V740 M1133 730.5 H1151 M1136 722 H1147 M1136 740 H1147"/>
<rect x="1160.5" y="720.5" width="21" height="20"/><rect x="1163.5" y="723.5" width="6" height="6"/><rect x="1167.5" y="727.5" width="6" height="6"/><rect x="1171.5" y="731.5" width="6" height="6"/>
<rect x="1192.5" y="723.5" width="6" height="6"/><rect x="1196.5" y="727.5" width="6" height="6"/><rect x="1200.5" y="731.5" width="6" height="6"/>
</g>
<path d="M1220 721 H1238 V729 H1234 A5 5 0 0 0 1224 729 H1220 Z" fill="#a0a0a0"/>
<path d="M1221 732 H1237 A8 8 0 0 1 1221 732 Z" fill="#a0a0a0"/>
<path d="M1249 721 H1267 V732 A9 8.5 0 0 1 1249 732 Z" fill="#a0a0a0"/>
</svg>
<!-- right panel -->
<div class="vs" style="left:1188px;top:106px;height:610px"></div>
<div class="a" style="left:1189px;top:106px;width:1px;height:609px;background:#fff"></div>

<svg style="left:0;top:0" width="1360" height="768" viewBox="0 0 1360 768">
<g shape-rendering="crispEdges">
<rect x="1193" y="117" width="110" height="1" fill="#a0a0a0"/><rect x="1193" y="118" width="110" height="1" fill="#fff"/>
<rect x="1193" y="121" width="110" height="1" fill="#a0a0a0"/><rect x="1193" y="122" width="110" height="1" fill="#fff"/>
<rect x="1308" y="113" width="10" height="9" fill="#f0f0f0"/>
<rect x="1308" y="113" width="10" height="1" fill="#fff"/><rect x="1308" y="113" width="1" height="9" fill="#fff"/>
<rect x="1308" y="121" width="11" height="1" fill="#808080"/><rect x="1318" y="113" width="1" height="9" fill="#808080"/>
<rect x="1311" y="115" width="5" height="5" fill="none" stroke="#000" stroke-width="1"/><rect x="1311" y="115" width="5" height="2" fill="#000"/>
<rect x="1321" y="113" width="1" height="9" fill="#fff"/><rect x="1321" y="113" width="10" height="1" fill="#fff"/>
<rect x="1321" y="121" width="11" height="1" fill="#808080"/><rect x="1331" y="113" width="1" height="9" fill="#808080"/>
<rect x="1190" y="125" width="148" height="1" fill="#a0a0a0"/>
<!-- tab -->
<rect x="1190" y="128" width="33" height="25" fill="#fafafa"/>
<rect x="1190" y="127" width="33" height="1" fill="#fff"/>
<rect x="1222" y="130" width="1" height="22" fill="#d8d8d8"/>
<rect x="1222" y="152" width="114" height="1" fill="#fff"/>
<rect x="1336" y="130" width="1" height="570" fill="#fff"/>
<rect x="1337" y="128" width="1" height="580" fill="#d0d0d0"/>
<rect x="1190" y="288" width="147" height="1" fill="#fff"/>
<rect x="1190" y="287" width="147" height="1" fill="#d8d8d8"/>
</g>
<g fill="#10108a"><rect x="1196" y="134" width="13" height="13" fill="none" stroke="#10108a" stroke-width="1.6"/></g>
<g fill="#e01010"><circle cx="1202.5" cy="134" r="1.8"/><circle cx="1202.5" cy="147" r="1.8"/><circle cx="1196" cy="140.5" r="1.8"/><circle cx="1209" cy="140.5" r="1.8"/></g>
<g fill="#10108a"><rect x="1195" y="133" width="2.5" height="2.5"/><rect x="1207.5" y="133" width="2.5" height="2.5"/><rect x="1195" y="145.5" width="2.5" height="2.5"/><rect x="1207.5" y="145.5" width="2.5" height="2.5"/></g>
<path d="M1322.5 115 L1328 120.5 M1328 115 L1322.5 120.5" stroke="#000" stroke-width="1.6"/>
</svg>
<div class="a" style="left:1197px;top:166px;font-size:12px;line-height:14px;transform:scaleX(0.91);transform-origin:0 0">Nudge dist.</div>
<div class="a" style="left:1197px;top:186px;font-size:12px;line-height:14px;transform:scaleX(0.91);transform-origin:0 0">Angle Incr.</div>
<div class="a" style="left:1268px;top:162px;width:42px;height:19px;background:#fff;border:1px solid #7a7a7a;overflow:hidden"><div class="a" style="left:3px;top:2px;font-size:12px;line-height:14px;white-space:nowrap;transform:scaleX(0.92);transform-origin:0 0">200.000</div></div>
<div class="a" style="left:1268px;top:183px;width:42px;height:20px;background:#fff;border:1px solid #7a7a7a;overflow:hidden"><div class="a" style="left:3px;top:2px;font-size:12px;line-height:14px;white-space:nowrap;transform:scaleX(0.92);transform-origin:0 0">90.000</div></div>
<div class="btn" style="left:1200px;top:208px;width:63px;height:21px;border:2px solid #0078d7;line-height:17px"><span style="display:inline-block;transform:scaleX(0.92)">[Q]Select</span></div>
<div class="btn" style="left:1267px;top:208px;width:63px;height:21px;line-height:19px"><span style="display:inline-block;transform:scaleX(0.92)">[R]Lock</span></div>
<div class="btn" style="left:1200px;top:234px;width:63px;height:21px;line-height:19px"><span style="display:inline-block;transform:scaleX(0.92)">[W]Display</span></div>
<div class="btn" style="left:1267px;top:234px;width:63px;height:21px;line-height:19px"><span style="display:inline-block;transform:scaleX(0.92)">[T]Order</span></div>
<div class="btn" style="left:1200px;top:260px;width:63px;height:21px;line-height:19px"><span style="display:inline-block;transform:scaleX(0.92)">[E]Layer</span></div>
<div class="btn" style="left:1267px;top:260px;width:63px;height:21px;line-height:19px"><span style="display:inline-block;transform:scaleX(0.92)">[Y]Align</span></div>
<!-- palette -->
<svg style="left:0;top:0" width="1360" height="768" viewBox="0 0 1360 768">
<rect x="1342" y="107" width="18" height="17" fill="#c8c8c8"/>
<path d="M1347 122 L1349 116 L1356 108 L1358 110 L1351 118 Z" fill="#f8e060" stroke="#000" stroke-width="1"/>
<path d="M1347 122 L1349 116 L1351 118 Z" fill="#000"/>
<rect x="1342.5" y="127.5" width="16" height="16" fill="#fff" stroke="#000" stroke-width="1.2"/>
<path d="M1344 129 L1357 142 M1357 129 L1344 142" stroke="#000" stroke-width="1"/>
<rect x="1342" y="146" width="18" height="18" fill="#c8c8c8"/>
<path d="M1346 160 L1354 152 M1353 149 L1357 153" stroke="#000" stroke-width="2"/>
<path d="M1356 148 L1358 150" stroke="#000" stroke-width="3"/>
<ellipse cx="1349" cy="162" rx="4.5" ry="1.8" fill="#1010d0"/>
<rect x="1342.5" y="167" width="16" height="16" fill="#202020" stroke="#000"/>
<g fill="#f0f020"><rect x="1344" y="169" width="3" height="3"/><rect x="1349" y="174" width="3" height="3"/></g>
<g fill="#e020e0"><rect x="1349" y="169" width="3" height="3"/><rect x="1354" y="178" width="3" height="3"/></g>
<g fill="#40c0ff"><rect x="1354" y="169" width="3" height="3"/><rect x="1344" y="178" width="3" height="3"/></g>
<path d="M1346 181 L1357 170" stroke="#f8e060" stroke-width="2"/>
<rect x="1342.5" y="186.5" width="16" height="17" fill="#ffc0cb" stroke="#000"/>
<rect x="1342.5" y="206.5" width="16" height="16" fill="#f0f0f0" stroke="#b8b8b8"/>
<path d="M1347 217 H1354 L1350.5 213.5 Z" fill="#b0b0b0"/>
<rect x="1342.5" y="226.5" width="16" height="17" fill="#f8f8f8" stroke="#a0a0a0"/>
<path d="M1347 233 H1354 L1350.5 237 Z" fill="#000"/>
<g stroke="#000" stroke-width="1">
<rect x="1342.5" y="246.5" width="16" height="17" fill="#ff0000"/>
<rect x="1342.5" y="266.5" width="16" height="17" fill="#ffff00"/>
<rect x="1342.5" y="286.5" width="16" height="17" fill="#0000ff"/>
<rect x="1342.5" y="306.5" width="16" height="17" fill="#00ff00"/>
<rect x="1342.5" y="326.5" width="16" height="17" fill="#00ffff"/>
<rect x="1342.5" y="346.5" width="16" height="17" fill="#ff00ff"/>
<rect x="1342.5" y="366.5" width="16" height="17" fill="#ffffff"/>
<rect x="1342.5" y="386.5" width="16" height="17" fill="#000000"/>
<rect x="1342.5" y="406.5" width="16" height="17" fill="#c0c0c0"/>
<rect x="1342.5" y="426.5" width="16" height="17" fill="#ff6820"/>
<rect x="1342.5" y="446.5" width="16" height="17" fill="#a52a2a"/>
<rect x="1342.5" y="466.5" width="16" height="17" fill="#ffc0cb"/>
<rect x="1342.5" y="486.5" width="16" height="17" fill="#3cb371"/>
<rect x="1342.5" y="506.5" width="16" height="17" fill="#3c8c98"/>
<rect x="1342.5" y="526.5" width="16" height="17" fill="#ffd700"/>
<rect x="1342.5" y="546.5" width="16" height="17" fill="#ffa460"/>
<rect x="1342.5" y="566.5" width="16" height="17" fill="#808000"/>
<rect x="1342.5" y="586.5" width="16" height="17" fill="#800000"/>
<rect x="1342.5" y="606.5" width="16" height="17" fill="#000080"/>
<rect x="1342.5" y="626.5" width="16" height="17" fill="#008000"/>
<rect x="1342.5" y="646.5" width="16" height="17" fill="#008080"/>
<rect x="1342.5" y="666.5" width="16" height="17" fill="#800080"/>
<rect x="1342.5" y="686.5" width="16" height="17" fill="#4b0082"/>
<rect x="1342.5" y="706.5" width="16" height="9" fill="#8aaed0"/>
</g>
</svg>
<div class="a" style="left:1342px;top:715px;width:18px;height:1px;background:#f0f0f0"></div>
<div class="hl" style="left:1185px;top:715px;width:175px"></div>
<svg style="left:0;top:0" width="1360" height="768" viewBox="0 0 1360 768">
<defs>
<radialGradient id="ball" cx="0.5" cy="0.5" r="0.5"><stop offset="0" stop-color="#fff"/><stop offset="0.55" stop-color="#e0e0e0"/><stop offset="0.85" stop-color="#909090"/><stop offset="1" stop-color="#505050"/></radialGradient>
<radialGradient id="sph" cx="0.5" cy="0.5" r="0.5"><stop offset="0" stop-color="#fff"/><stop offset="0.6" stop-color="#e8e8e8"/><stop offset="0.9" stop-color="#b0b0b0"/><stop offset="1" stop-color="#909090"/></radialGradient>
<filter id="relief" x="320" y="318" width="606" height="290" filterUnits="userSpaceOnUse" color-interpolation-filters="sRGB">
 <feColorMatrix in="SourceGraphic" type="luminanceToAlpha" result="h0"/>
 <feComponentTransfer in="h0" result="mask"><feFuncA type="linear" slope="30" intercept="-1"/></feComponentTransfer>
 <feGaussianBlur in="h0" stdDeviation="1.1" result="h"/>
 <feDiffuseLighting in="h" surfaceScale="5" diffuseConstant="1" lighting-color="#8e8e4a" result="diff">
   <feDistantLight azimuth="250" elevation="60"/>
 </feDiffuseLighting>
 <feSpecularLighting in="h" surfaceScale="5" specularConstant="0.9" specularExponent="28" lighting-color="#dcdcb0" result="spec">
   <feDistantLight azimuth="250" elevation="55"/>
 </feSpecularLighting>
 <feComposite in="diff" in2="spec" operator="arithmetic" k2="1" k3="0.5" result="lit"/>
 <feComposite in="lit" in2="mask" operator="in"/>
</filter>
<g id="q"><path fill="#707070" d="M436 396 L452 386 L470 380 L500 384 L525 390 L540 405 L548 418 L560 412 L578 424 L596 440 L612 448 L623 451 L623 458 L608 457 L590 459 L574 461 L560 456.5 L545 449 L530 440.5 L520 439 L514 448 L499 450 L479 444 L462 445 L452 456 L440 458 L436 440Z"/><path fill="#707070" d="M503 354 L515 345 L528 345 L534 365 L530 380 L518 374 L506 368Z"/><path fill="#707070" d="M536 368 L548 352 L562 346 L577 340 L590 331 L606 332 L616 340 L614 362 L600 372 L585 380 L570 400 L555 398 L540 390Z"/><path fill="none" stroke="#d0d0d0" stroke-width="2.2" stroke-linecap="round" d="M526.0 398.0 L527.0 400.5 L528.4 404.0 L530.0 408.1 L531.8 412.6 L533.7 417.3 L535.8 422.0 L537.9 426.3 L540.0 430.0 L542.3 433.4 L545.0 436.7 L547.9 439.9 L550.9 443.0 L553.7 445.8 L556.3 448.3 L558.4 450.4 L560.0 452.0"/><path fill="none" stroke="#d0d0d0" stroke-width="2.2" stroke-linecap="round" d="M526.0 398.0 L528.2 401.1 L531.2 405.4 L534.7 410.5 L538.6 416.1 L542.8 421.9 L547.0 427.5 L551.1 432.7 L555.0 437.0 L558.9 440.7 L563.1 444.2 L567.5 447.5 L571.8 450.4 L575.9 453.1 L579.6 455.4 L582.7 457.4 L585.0 459.0"/><path fill="none" stroke="#d0d0d0" stroke-width="2.2" stroke-linecap="round" d="M526.0 398.0 L529.4 401.4 L534.0 406.1 L539.5 411.7 L545.6 417.8 L552.0 424.1 L558.4 430.1 L564.5 435.6 L570.0 440.0 L575.3 443.6 L580.8 446.8 L586.4 449.6 L591.8 452.1 L596.8 454.3 L601.3 456.1 L605.1 457.7 L608.0 459.0"/><path fill="none" stroke="#d0d0d0" stroke-width="2.2" stroke-linecap="round" d="M526.0 398.0 L530.7 401.2 L537.1 405.7 L544.7 411.0 L553.1 416.9 L561.8 422.9 L570.3 428.6 L578.2 433.8 L585.0 438.0 L591.0 441.4 L596.9 444.5 L602.5 447.2 L607.7 449.5 L612.5 451.5 L616.7 453.3 L620.2 454.8 L623.0 456.0"/><path fill="none" stroke="#d0d0d0" stroke-width="2.2" stroke-linecap="round" d="M526.0 398.0 L530.3 400.1 L536.2 403.0 L543.3 406.4 L551.0 410.2 L559.0 414.1 L566.8 418.0 L573.9 421.7 L580.0 425.0 L585.3 428.1 L590.3 431.2 L595.0 434.2 L599.4 437.2 L603.3 439.9 L606.8 442.4 L609.7 444.4 L612.0 446.0"/><path fill="none" stroke="#d0d0d0" stroke-width="2.2" stroke-linecap="round" d="M526.0 398.0 L529.5 399.7 L534.3 402.0 L540.0 404.7 L546.2 407.8 L552.7 410.9 L559.1 414.1 L565.0 417.2 L570.0 420.0 L574.5 422.7 L578.8 425.6 L582.9 428.5 L586.8 431.4 L590.3 434.1 L593.3 436.5 L595.9 438.5 L598.0 440.0"/><path fill="none" stroke="#d0d0d0" stroke-width="2.2" stroke-linecap="round" d="M526.0 398.0 L528.3 398.9 L531.3 400.0 L534.9 401.4 L538.9 402.9 L543.1 404.5 L547.4 406.3 L551.4 408.1 L555.0 410.0 L558.5 412.1 L562.1 414.5 L565.8 417.1 L569.3 419.8 L572.6 422.3 L575.6 424.6 L578.1 426.6 L580.0 428.0"/><path fill="none" stroke="#c8c8c8" stroke-width="1.8" stroke-linecap="round" d="M446.0 398.0 L447.8 397.7 L450.2 397.2 L453.0 396.7 L456.1 396.1 L459.5 395.5 L463.0 394.9 L466.5 394.4 L470.0 394.0 L473.5 393.7 L477.3 393.4 L481.2 393.1 L485.2 392.8 L489.2 392.7 L493.1 392.6 L496.7 392.7 L500.0 393.0 L503.1 393.5 L506.2 394.4 L509.1 395.3 L511.9 396.4 L514.4 397.5 L516.6 398.6 L518.5 399.4 L520.0 400.0"/><path fill="none" stroke="#c8c8c8" stroke-width="1.8" stroke-linecap="round" d="M449.0 402.0 L450.9 401.6 L453.4 401.0 L456.4 400.4 L459.7 399.6 L463.2 398.9 L466.9 398.2 L470.5 397.5 L474.0 397.0 L477.5 396.5 L481.2 396.1 L485.0 395.6 L488.9 395.2 L492.7 395.0 L496.4 394.8 L499.8 394.8 L503.0 395.0 L506.0 395.5 L508.9 396.3 L511.7 397.3 L514.3 398.4 L516.7 399.5 L518.8 400.5 L520.6 401.4 L522.0 402.0"/><path fill="none" stroke="#c8c8c8" stroke-width="1.8" stroke-linecap="round" d="M452.0 406.0 L454.0 405.5 L456.6 404.9 L459.8 404.1 L463.2 403.2 L467.0 402.3 L470.8 401.4 L474.5 400.6 L478.0 400.0 L481.5 399.4 L485.1 398.8 L488.8 398.2 L492.5 397.7 L496.1 397.3 L499.7 397.0 L503.0 396.9 L506.0 397.0 L508.9 397.4 L511.6 398.2 L514.3 399.2 L516.8 400.3 L519.0 401.4 L521.0 402.5 L522.7 403.4 L524.0 404.0"/><path fill="none" stroke="#c8c8c8" stroke-width="1.8" stroke-linecap="round" d="M455.0 410.0 L457.1 409.4 L459.9 408.7 L463.1 407.8 L466.8 406.8 L470.7 405.7 L474.6 404.7 L478.4 403.8 L482.0 403.0 L485.4 402.3 L489.0 401.5 L492.6 400.8 L496.1 400.1 L499.6 399.6 L503.0 399.2 L506.1 399.0 L509.0 399.0 L511.7 399.4 L514.4 400.1 L516.9 401.1 L519.2 402.2 L521.3 403.4 L523.2 404.5 L524.8 405.4 L526.0 406.0"/><path fill="none" stroke="#c8c8c8" stroke-width="1.8" stroke-linecap="round" d="M458.0 414.0 L460.2 413.4 L463.1 412.5 L466.5 411.5 L470.4 410.3 L474.4 409.1 L478.5 408.0 L482.4 406.9 L486.0 406.0 L489.4 405.1 L492.9 404.3 L496.3 403.4 L499.8 402.6 L503.1 401.9 L506.2 401.3 L509.2 401.0 L512.0 401.0 L514.6 401.3 L517.1 402.1 L519.4 403.1 L521.6 404.2 L523.6 405.4 L525.4 406.5 L526.8 407.4 L528.0 408.0"/><path fill="none" stroke="#c8c8c8" stroke-width="1.8" stroke-linecap="round" d="M461.0 418.0 L463.3 417.3 L466.3 416.3 L469.9 415.2 L473.9 413.9 L478.1 412.6 L482.4 411.2 L486.4 410.0 L490.0 409.0 L493.4 408.0 L496.8 407.0 L500.1 406.0 L503.4 405.0 L506.5 404.2 L509.5 403.5 L512.4 403.1 L515.0 403.0 L517.5 403.3 L519.8 404.0 L522.0 405.0 L524.1 406.1 L525.9 407.3 L527.5 408.4 L528.9 409.4 L530.0 410.0"/><path fill="none" stroke="#d0d0d0" stroke-width="2.0" stroke-linecap="round" d="M548.0 372.0 L549.7 369.9 L551.9 367.0 L554.5 363.5 L557.4 359.8 L560.5 355.9 L563.7 352.1 L566.9 348.8 L570.0 346.0 L573.2 343.7 L576.8 341.7 L580.6 339.9 L584.4 338.4 L588.0 337.0 L591.2 335.8 L594.0 334.8 L596.0 334.0"/><path fill="none" stroke="#d0d0d0" stroke-width="2.0" stroke-linecap="round" d="M548.0 372.0 L550.5 370.3 L553.8 367.9 L557.8 365.1 L562.2 362.0 L566.9 358.8 L571.5 355.6 L576.0 352.6 L580.0 350.0 L583.9 347.6 L587.9 345.2 L592.0 342.9 L596.0 340.6 L599.7 338.6 L603.1 336.7 L605.9 335.2 L608.0 334.0"/><path fill="none" stroke="#d0d0d0" stroke-width="2.0" stroke-linecap="round" d="M548.0 372.0 L551.4 370.7 L556.0 369.0 L561.5 366.9 L567.5 364.6 L573.7 362.3 L579.8 360.0 L585.3 357.8 L590.0 356.0 L594.0 354.4 L597.8 352.8 L601.4 351.4 L604.6 350.0 L607.5 348.8 L610.1 347.7 L612.3 346.7 L614.0 346.0"/><path fill="none" stroke="#d0d0d0" stroke-width="2.0" stroke-linecap="round" d="M548.0 372.0 L551.6 371.5 L556.5 370.9 L562.3 370.2 L568.8 369.4 L575.3 368.5 L581.7 367.6 L587.3 366.8 L592.0 366.0 L595.8 365.2 L599.2 364.4 L602.1 363.5 L604.8 362.6 L607.0 361.8 L609.0 361.1 L610.6 360.5 L612.0 360.0"/><path fill="none" stroke="#d0d0d0" stroke-width="2.0" stroke-linecap="round" d="M548.0 372.0 L550.6 372.3 L554.0 372.7 L558.2 373.2 L562.8 373.7 L567.5 374.2 L572.1 374.6 L576.4 374.9 L580.0 375.0 L583.2 374.9 L586.3 374.6 L589.3 374.2 L592.0 373.7 L594.5 373.2 L596.7 372.7 L598.5 372.3 L600.0 372.0"/><circle cx="493.5" cy="415.7" r="0.7" fill="#404040"/><circle cx="533.6" cy="411.4" r="0.7" fill="#404040"/><circle cx="498.2" cy="417.0" r="0.7" fill="#404040"/><circle cx="470.7" cy="413.5" r="0.7" fill="#404040"/><circle cx="508.5" cy="426.5" r="0.7" fill="#404040"/><circle cx="463.0" cy="404.0" r="0.7" fill="#404040"/><circle cx="462.7" cy="427.2" r="0.7" fill="#404040"/><circle cx="513.9" cy="391.9" r="0.7" fill="#404040"/><circle cx="538.5" cy="434.4" r="0.7" fill="#404040"/><circle cx="510.6" cy="418.3" r="0.7" fill="#404040"/><circle cx="468.4" cy="390.7" r="0.7" fill="#404040"/><circle cx="499.9" cy="392.7" r="0.7" fill="#404040"/><circle cx="471.2" cy="401.1" r="0.7" fill="#404040"/><circle cx="457.6" cy="411.3" r="0.7" fill="#404040"/><circle cx="492.4" cy="428.8" r="0.7" fill="#404040"/><circle cx="499.1" cy="419.5" r="0.7" fill="#404040"/><circle cx="497.5" cy="420.5" r="0.7" fill="#404040"/><circle cx="493.9" cy="402.8" r="0.7" fill="#404040"/><circle cx="539.8" cy="435.8" r="0.7" fill="#404040"/><circle cx="526.4" cy="422.6" r="0.7" fill="#404040"/><circle cx="481.8" cy="400.6" r="0.7" fill="#404040"/><circle cx="479.6" cy="393.2" r="0.7" fill="#404040"/><circle cx="520.1" cy="408.4" r="0.7" fill="#404040"/><circle cx="527.0" cy="407.8" r="0.7" fill="#404040"/><circle cx="536.4" cy="429.0" r="0.7" fill="#404040"/><circle cx="455.0" cy="399.6" r="0.7" fill="#404040"/><circle cx="532.4" cy="411.6" r="0.7" fill="#404040"/><circle cx="538.3" cy="408.3" r="0.7" fill="#404040"/><circle cx="461.2" cy="419.0" r="0.7" fill="#404040"/><circle cx="521.2" cy="402.4" r="0.7" fill="#404040"/><ellipse fill="url(#ball)" cx="340" cy="441.8" rx="11" ry="12.5" transform="rotate(10 340 441.8)"/><path fill="none" stroke="#808080" stroke-width="1.2" d="M344 436 A5 5 0 1 0 345 446"/><path fill="#fff" d="M339.3 439.9 L340.1 440.8 L341.4 442.0 L342.9 443.5 L344.8 445.0 L346.9 446.7 L349.2 448.4 L351.6 450.1 L354.1 451.7 L356.7 452.7 L359.3 453.6 L362.0 454.6 L364.7 455.4 L367.5 456.2 L370.3 457.0 L373.2 457.7 L376.0 458.3 L378.9 458.8 L381.8 459.2 L384.7 459.6 L387.6 459.9 L390.6 460.1 L393.5 460.3 L396.5 460.4 L399.6 460.5 L402.7 460.5 L405.9 460.5 L409.1 460.4 L412.3 460.3 L415.4 460.1 L418.5 459.9 L421.5 459.7 L424.5 459.5 L427.5 459.1 L430.6 458.7 L433.7 458.2 L436.7 457.7 L439.5 457.2 L442.0 456.7 L444.1 456.3 L445.6 456.0 L444.4 444.0 L442.7 444.0 L440.6 444.1 L438.1 444.1 L435.3 444.3 L432.3 444.4 L429.3 444.5 L426.4 444.5 L423.5 444.5 L420.7 444.6 L417.8 444.7 L414.8 444.8 L411.8 444.8 L408.9 444.8 L406.0 444.8 L403.1 444.7 L400.4 444.5 L397.7 444.2 L395.1 443.9 L392.5 443.5 L389.9 443.0 L387.4 442.5 L384.9 442.0 L382.4 441.4 L380.0 440.7 L377.6 440.1 L375.2 439.4 L372.8 438.6 L370.4 437.8 L368.1 437.0 L365.9 436.1 L363.8 435.2 L361.9 434.3 L360.0 433.8 L357.9 433.0 L355.8 432.1 L353.7 431.1 L351.7 430.2 L349.8 429.3 L348.1 428.6 L346.7 428.1Z"/><path fill="none" stroke="#8c8c8c" stroke-width="1.0" stroke-linecap="round" d="M348.1 439.8 L350.2 441.2 L352.5 442.6 L354.7 444.0 L357.0 445.2 L359.4 446.1 L361.8 447.1 L364.3 448.0 L366.8 448.8 L369.5 449.6 L372.1 450.4 L374.8 451.1 L377.5 451.7 L380.2 452.2 L382.9 452.7 L385.7 453.2 L388.5 453.5 L391.3 453.9 L394.1 454.1 L397.0 454.3 L399.9 454.5 L402.9 454.6 L405.9 454.6 L409.0 454.6 L412.1 454.5 L415.2 454.4 L418.3 454.2 L421.2 454.0 L424.1 453.9 L427.0 453.6 L430.1 453.3 L433.2 453.0"/><path fill="#fff" d="M351.2 435.4 L351.8 435.0 L352.6 434.4 L353.6 433.8 L354.7 433.1 L355.9 432.3 L357.0 431.6 L358.0 431.0 L358.9 430.5 L359.7 430.0 L360.5 429.5 L361.4 428.9 L362.3 428.4 L363.2 428.0 L363.9 427.5 L364.6 427.1 L365.1 426.8 L362.9 421.2 L362.3 421.3 L361.6 421.5 L360.7 421.7 L359.7 421.9 L358.6 422.3 L357.5 422.6 L356.3 423.0 L355.1 423.5 L354.0 424.1 L352.8 424.8 L351.6 425.6 L350.4 426.3 L349.3 427.1 L348.3 427.7 L347.5 428.2 L346.8 428.6Z"/><path fill="#fff" d="M375.5 406.3 L374.8 406.3 L373.8 406.4 L372.5 406.5 L371.0 406.8 L369.4 407.0 L367.8 407.4 L366.1 408.0 L364.4 408.9 L363.1 410.1 L362.0 411.5 L361.2 412.8 L360.7 414.2 L360.3 415.5 L360.0 416.8 L359.8 417.9 L359.8 419.1 L359.8 420.4 L360.0 421.7 L360.3 422.9 L360.7 424.2 L361.2 425.4 L361.8 426.5 L362.5 427.7 L363.4 428.9 L364.8 430.2 L366.2 431.1 L367.4 431.6 L368.3 432.0 L368.9 432.2 L369.2 432.4 L369.3 432.4 L369.2 432.3 L369.0 432.1 L369.1 432.4 L369.4 433.1 L369.8 434.2 L370.5 435.7 L371.5 437.4 L372.9 439.2 L374.7 440.7 L376.4 441.8 L378.2 442.8 L380.1 443.7 L382.2 444.5 L384.3 445.3 L386.5 446.0 L388.8 446.6 L391.0 447.0 L393.4 447.4 L395.7 447.6 L398.2 447.8 L400.6 447.8 L403.1 447.8 L405.7 447.7 L408.2 447.5 L410.8 447.3 L413.5 446.8 L416.2 446.2 L418.9 445.5 L421.6 444.8 L424.3 444.0 L426.9 443.2 L429.4 442.3 L431.9 441.4 L434.3 440.4 L436.8 439.3 L439.2 438.1 L441.4 436.9 L443.5 435.7 L445.3 434.7 L446.8 433.8 L447.9 433.2 L444.1 424.8 L442.8 425.3 L441.1 425.9 L439.2 426.7 L437.1 427.5 L434.8 428.4 L432.6 429.2 L430.3 429.9 L428.1 430.6 L425.9 431.2 L423.5 431.9 L421.1 432.5 L418.6 433.1 L416.1 433.6 L413.7 434.1 L411.4 434.5 L409.2 434.7 L407.0 435.0 L404.8 435.2 L402.7 435.4 L400.6 435.4 L398.6 435.4 L396.6 435.3 L394.7 435.2 L393.0 435.0 L391.2 434.7 L389.5 434.3 L387.8 433.9 L386.2 433.4 L384.6 432.9 L383.3 432.3 L382.1 431.7 L381.3 431.3 L381.1 431.1 L381.0 431.0 L380.8 430.6 L380.5 430.0 L380.2 429.0 L379.7 427.7 L378.9 426.2 L377.6 424.5 L376.1 423.2 L374.7 422.3 L373.5 421.7 L372.5 421.3 L371.9 421.1 L371.6 421.0 L371.7 421.0 L372.0 421.3 L372.0 421.2 L371.8 421.0 L371.7 420.7 L371.5 420.3 L371.4 419.9 L371.3 419.5 L371.3 419.2 L371.2 418.9 L371.2 418.5 L371.2 418.1 L371.1 417.7 L371.1 417.3 L371.1 417.1 L371.1 417.0 L371.1 416.9 L371.0 416.9 L371.0 416.7 L371.5 416.2 L372.5 415.6 L373.6 415.0 L374.8 414.4 L375.9 413.9 L376.9 413.3 L377.7 412.9Z"/><path fill="none" stroke="#8c8c8c" stroke-width="1.0" stroke-linecap="round" d="M366.9 411.9 L366.1 412.7 L365.4 413.5 L365.0 414.4 L364.6 415.4 L364.4 416.3 L364.2 417.2 L364.1 418.1 L364.1 419.0 L364.1 419.9 L364.2 420.9 L364.5 421.8 L364.8 422.7 L365.1 423.6 L365.5 424.5 L366.0 425.3 L366.6 426.1 L367.4 426.8 L368.2 427.3 L369.1 427.7 L369.9 428.0 L370.6 428.3 L371.3 428.6 L371.9 429.0 L372.3 429.4 L372.7 429.9 L373.1 430.6 L373.4 431.6 L373.8 432.6 L374.3 433.8 L375.0 435.0 L376.0 436.2 L377.2 437.2 L378.6 438.0 L380.1 438.9 L381.8 439.6 L383.7 440.4 L385.6 441.0 L387.6 441.6 L389.7 442.1 L391.8 442.5 L393.9 442.8 L396.1 443.0 L398.3 443.1 L400.6 443.2 L403.0 443.1 L405.4 443.0 L407.8 442.8 L410.2 442.6 L412.7 442.2 L415.3 441.7 L417.9 441.1 L420.5 440.4 L423.1 439.7 L425.7 438.9 L428.1 438.1 L430.5 437.4"/><circle fill="url(#ball)" cx="375" cy="419" r="7.5"/><path fill="none" stroke="#808080" stroke-width="1" d="M378 416 A3.5 3.5 0 1 0 378 423"/><path fill="#fff" d="M396.2 398.3 L395.7 398.3 L394.9 398.4 L393.9 398.6 L392.7 398.8 L391.5 399.0 L390.2 399.4 L388.8 399.9 L387.4 400.6 L386.3 401.6 L385.4 402.7 L384.7 403.9 L384.2 405.0 L383.8 406.1 L383.6 407.1 L383.4 408.1 L383.3 409.1 L383.4 410.2 L383.6 411.3 L383.8 412.4 L384.2 413.4 L384.6 414.4 L385.1 415.3 L385.7 416.2 L386.4 417.2 L387.6 418.3 L388.8 419.1 L389.8 419.5 L390.4 419.8 L390.8 419.9 L390.9 419.9 L390.9 419.9 L390.9 419.9 L390.9 420.1 L391.1 420.6 L391.5 421.5 L392.1 422.7 L392.8 424.1 L393.7 425.6 L395.1 427.3 L396.7 428.7 L398.2 429.7 L399.8 430.6 L401.5 431.5 L403.3 432.2 L405.3 432.9 L407.4 433.5 L409.5 433.9 L411.8 434.1 L414.0 434.1 L416.3 434.0 L418.6 433.8 L421.0 433.4 L423.4 432.9 L425.8 432.4 L428.1 431.7 L430.4 430.9 L432.6 429.8 L434.7 428.6 L436.8 427.4 L438.7 426.0 L440.6 424.6 L442.4 423.2 L444.1 421.8 L445.7 420.4 L447.4 418.7 L449.0 416.9 L450.4 415.1 L451.8 413.3 L453.0 411.6 L454.1 410.1 L454.9 408.9 L455.5 408.0 L448.5 402.0 L447.6 402.8 L446.5 403.9 L445.3 405.2 L443.9 406.6 L442.5 408.0 L441.1 409.4 L439.6 410.6 L438.3 411.6 L436.8 412.7 L435.3 413.8 L433.7 414.9 L432.0 416.0 L430.4 416.9 L428.8 417.8 L427.2 418.5 L425.6 419.1 L424.1 419.7 L422.3 420.3 L420.5 420.8 L418.7 421.2 L416.9 421.5 L415.2 421.8 L413.6 421.9 L412.2 421.9 L411.0 421.9 L409.8 421.7 L408.5 421.4 L407.3 421.1 L406.2 420.7 L405.1 420.2 L404.1 419.7 L403.3 419.3 L403.0 419.1 L402.6 418.8 L402.2 418.3 L401.7 417.5 L401.1 416.6 L400.5 415.5 L399.6 414.2 L398.5 412.9 L397.3 411.8 L396.0 411.0 L395.0 410.4 L394.1 410.1 L393.7 409.9 L393.6 409.9 L393.9 410.1 L394.2 410.4 L394.2 410.4 L394.1 410.2 L394.0 410.0 L393.9 409.7 L393.8 409.4 L393.7 409.2 L393.7 409.1 L393.7 408.9 L393.6 408.7 L393.6 408.4 L393.5 408.1 L393.5 407.9 L393.5 407.8 L393.4 407.8 L393.3 407.7 L393.2 407.8 L393.1 407.6 L393.5 407.3 L394.2 406.9 L395.1 406.4 L396.0 406.0 L396.9 405.6 L397.8 405.2 L398.4 404.9Z"/><path fill="none" stroke="#8c8c8c" stroke-width="1.0" stroke-linecap="round" d="M389.6 403.3 L388.9 403.9 L388.4 404.6 L388.0 405.3 L387.7 406.1 L387.5 406.8 L387.3 407.6 L387.2 408.3 L387.2 409.0 L387.2 409.8 L387.4 410.5 L387.6 411.3 L387.8 412.0 L388.1 412.7 L388.5 413.4 L388.9 414.0 L389.3 414.7 L389.9 415.2 L390.6 415.6 L391.2 415.9 L391.8 416.1 L392.3 416.3 L392.8 416.6 L393.3 416.9 L393.7 417.3 L394.2 417.9 L394.6 418.7 L395.1 419.7 L395.7 420.8 L396.3 421.9 L397.1 423.1 L398.0 424.2 L399.2 425.2 L400.4 426.0 L401.8 426.7 L403.3 427.4 L404.8 428.1 L406.5 428.6 L408.3 429.0 L410.1 429.4 L411.9 429.5 L413.9 429.5 L415.9 429.4 L418.0 429.2 L420.2 428.8 L422.3 428.4 L424.5 427.8 L426.6 427.2 L428.6 426.5 L430.5 425.6 L432.5 424.6 L434.4 423.5 L436.2 422.3 L438.0 421.0 L439.7 419.7 L441.4 418.4 L442.9 417.1"/><circle fill="url(#ball)" cx="396" cy="409" r="6.8"/><path fill="none" stroke="#808080" stroke-width="1" d="M399 406 A3 3 0 1 0 399 412"/><path fill="#fff" d="M411.9 417.3 L412.6 417.6 L413.6 418.0 L414.9 418.6 L416.4 419.2 L418.1 419.8 L420.0 420.4 L421.9 420.8 L423.9 421.0 L425.8 420.9 L427.7 420.7 L429.6 420.3 L431.6 419.9 L433.5 419.4 L435.5 418.7 L437.4 418.0 L439.4 417.2 L441.4 416.0 L443.5 414.7 L445.5 413.2 L447.5 411.7 L449.4 410.2 L451.0 408.9 L452.3 407.7 L453.3 406.9 L450.7 403.1 L449.5 403.7 L448.0 404.7 L446.2 405.8 L444.2 406.9 L442.2 408.1 L440.2 409.3 L438.3 410.2 L436.6 410.8 L435.0 411.4 L433.4 411.9 L431.7 412.3 L430.0 412.6 L428.4 412.8 L426.9 413.0 L425.4 413.0 L424.1 413.0 L422.9 413.0 L421.6 412.8 L420.2 412.5 L418.8 412.1 L417.5 411.7 L416.2 411.3 L415.0 411.0 L414.1 410.7Z"/><circle fill="url(#ball)" cx="409" cy="409" r="5"/><circle fill="url(#ball)" cx="391.6" cy="442.4" r="4.8"/><circle cx="423" cy="386" r="6" fill="#a8a8a8"/><path fill="#fff" d="M432.4 391.7 L432.7 391.1 L433.1 390.2 L433.6 389.0 L434.2 387.7 L434.7 386.3 L435.2 384.8 L435.4 383.1 L435.4 381.4 L435.1 379.8 L434.5 378.4 L433.8 377.2 L433.0 376.0 L432.0 374.9 L431.0 374.0 L429.9 373.1 L428.7 372.4 L427.4 371.8 L426.0 371.4 L424.6 371.1 L423.1 370.9 L421.5 370.9 L419.9 371.0 L418.2 371.4 L416.5 372.3 L415.0 373.4 L413.9 374.7 L412.9 376.0 L412.1 377.4 L411.5 378.9 L410.9 380.3 L410.4 381.7 L410.1 383.1 L409.8 384.5 L409.6 386.0 L409.5 387.5 L409.5 389.0 L409.7 390.7 L410.0 392.4 L410.5 394.1 L411.3 395.8 L412.2 397.3 L413.3 398.7 L414.6 400.0 L415.9 401.1 L417.3 402.2 L418.8 403.1 L420.4 403.9 L422.0 404.7 L423.6 405.2 L425.4 405.6 L427.1 406.0 L429.0 406.2 L431.0 406.4 L433.0 406.4 L435.0 406.2 L437.2 405.9 L439.4 405.3 L441.5 404.6 L443.5 403.7 L445.4 402.8 L447.3 401.9 L449.0 401.1 L450.7 400.2 L452.4 399.5 L454.2 398.8 L456.0 398.0 L457.9 397.2 L459.7 396.4 L461.6 395.7 L463.4 395.0 L465.2 394.3 L466.9 393.7 L468.7 393.0 L470.4 392.3 L472.0 391.7 L473.7 391.0 L475.3 390.5 L477.1 389.9 L478.9 389.4 L480.8 388.9 L483.0 388.5 L485.6 388.0 L488.5 387.6 L491.3 387.2 L494.1 386.9 L496.6 386.5 L498.8 386.3 L500.4 386.0 L499.6 378.0 L498.1 378.0 L495.9 378.1 L493.4 378.2 L490.5 378.3 L487.6 378.4 L484.6 378.6 L481.7 378.8 L479.2 379.1 L476.9 379.4 L474.7 379.7 L472.7 380.1 L470.7 380.5 L468.8 380.9 L466.9 381.3 L465.0 381.8 L463.1 382.3 L461.1 383.0 L459.1 383.8 L457.1 384.5 L455.1 385.3 L453.2 386.1 L451.3 386.9 L449.5 387.7 L447.6 388.5 L445.7 389.3 L443.7 390.3 L441.9 391.2 L440.2 392.0 L438.6 392.8 L437.2 393.4 L435.9 393.8 L434.8 394.1 L433.7 394.3 L432.6 394.4 L431.4 394.4 L430.2 394.3 L429.1 394.1 L428.0 393.9 L426.9 393.6 L426.0 393.3 L425.2 393.1 L424.3 392.7 L423.5 392.3 L422.8 391.9 L422.1 391.4 L421.5 391.0 L421.0 390.5 L420.7 390.2 L420.5 389.9 L420.3 389.5 L420.1 388.9 L420.0 388.2 L419.9 387.4 L419.9 386.5 L419.9 385.7 L419.9 384.9 L420.0 384.1 L420.2 383.2 L420.5 382.3 L420.7 381.4 L421.1 380.7 L421.3 380.1 L421.5 379.8 L421.5 379.7 L421.5 379.7 L421.7 379.6 L422.2 379.4 L422.8 379.4 L423.5 379.4 L424.2 379.4 L424.9 379.5 L425.3 379.6 L425.7 379.8 L426.2 380.1 L426.8 380.4 L427.3 380.9 L427.7 381.4 L428.1 381.9 L428.4 382.3 L428.6 382.6 L428.7 383.0 L428.7 383.7 L428.6 384.8 L428.4 386.0 L428.2 387.3 L427.9 388.4 L427.7 389.5 L427.6 390.3Z"/><path fill="none" stroke="#8c8c8c" stroke-width="1.0" stroke-linecap="round" d="M432.1 379.7 L431.5 378.7 L430.8 377.8 L430.1 377.0 L429.2 376.2 L428.3 375.6 L427.4 375.1 L426.4 374.7 L425.3 374.4 L424.2 374.2 L423.0 374.1 L421.8 374.1 L420.6 374.2 L419.4 374.5 L418.4 375.1 L417.5 375.8 L416.7 376.7 L416.0 377.8 L415.4 378.9 L414.8 380.1 L414.4 381.4 L414.0 382.6 L413.8 383.8 L413.6 384.9 L413.5 386.2 L413.4 387.4 L413.4 388.7 L413.6 390.0 L413.8 391.3 L414.3 392.5 L414.8 393.7 L415.5 394.8 L416.4 395.8 L417.4 396.8 L418.5 397.7 L419.6 398.5 L420.9 399.2 L422.2 399.9 L423.5 400.4 L424.9 400.9 L426.3 401.2 L427.9 401.5 L429.5 401.7 L431.1 401.9 L432.8 401.9 L434.5 401.7 L436.3 401.5 L438.1 401.0 L439.9 400.4 L441.7 399.6 L443.5 398.8 L445.3 397.9 L447.0 397.0 L448.8 396.2 L450.6 395.4 L452.4 394.6 L454.3 393.8 L456.1 393.0 L458.0 392.3 L459.9 391.5 L461.8 390.8 L463.6 390.1 L465.5 389.4 L467.3 388.8 L469.1 388.2 L470.8 387.6 L472.6 387.1 L474.3 386.6 L476.2 386.1 L478.1 385.6"/><path fill="#e8e8e8" d="M471.0 387.7 L469.8 388.1 L468.1 388.7 L466.0 389.5 L463.6 390.4 L461.0 391.5 L458.4 392.7 L455.8 394.0 L453.3 395.5 L451.3 397.1 L449.4 398.7 L447.7 400.3 L446.0 402.1 L444.4 403.9 L442.9 405.8 L441.5 407.8 L440.2 409.9 L439.0 412.1 L438.0 414.3 L437.1 416.7 L436.2 419.1 L435.5 421.5 L434.9 424.0 L434.4 426.5 L434.1 428.9 L433.9 431.4 L433.9 433.8 L434.0 436.3 L434.2 438.7 L434.5 441.0 L435.0 443.3 L435.6 445.5 L436.3 447.8 L437.2 450.0 L438.4 452.2 L439.7 454.2 L441.0 456.0 L442.2 457.6 L443.3 459.0 L444.2 460.0 L444.8 460.7 L453.2 455.3 L452.7 454.2 L451.9 452.9 L451.0 451.5 L450.2 450.0 L449.3 448.4 L448.6 446.9 L448.1 445.5 L447.7 444.2 L447.5 442.8 L447.3 441.2 L447.2 439.5 L447.2 437.8 L447.2 436.1 L447.4 434.3 L447.6 432.7 L447.9 431.1 L448.3 429.5 L448.9 427.8 L449.5 426.1 L450.3 424.4 L451.1 422.7 L452.0 421.1 L452.9 419.6 L453.8 418.1 L454.7 416.8 L455.7 415.4 L456.7 414.1 L457.8 412.9 L458.9 411.7 L460.1 410.6 L461.4 409.5 L462.7 408.5 L464.0 407.5 L465.7 406.4 L467.7 405.2 L469.8 404.1 L471.9 403.0 L473.9 402.0 L475.7 401.1 L477.0 400.3Z"/><path fill="none" stroke="#8c8c8c" stroke-width="1.0" stroke-linecap="round" d="M465.9 395.5 L463.5 396.6 L461.1 397.8 L458.8 399.1 L456.8 400.4 L455.1 401.7 L453.4 403.1 L451.9 404.6 L450.4 406.1 L449.0 407.8 L447.7 409.4 L446.4 411.2 L445.3 413.0 L444.2 414.9 L443.2 416.9 L442.3 419.0 L441.5 421.1 L440.8 423.3 L440.1 425.4 L439.6 427.6 L439.3 429.7 L439.0 431.9 L438.9 434.0 L438.9 436.2 L439.1 438.4 L439.3 440.5 L439.6 442.5 L440.0 444.5 L440.6 446.4 L441.3 448.3 L442.2 450.2 L443.3 452.0"/><circle fill="url(#ball)" cx="443" cy="450" r="9"/><circle cx="448.4" cy="409.0" r="0.8" fill="#909090"/><circle cx="471.4" cy="394.0" r="0.8" fill="#909090"/><circle cx="471.1" cy="390.7" r="0.8" fill="#909090"/><circle cx="441.7" cy="411.7" r="0.8" fill="#909090"/><circle cx="450.3" cy="410.2" r="0.8" fill="#909090"/><circle cx="459.3" cy="406.5" r="0.8" fill="#909090"/><circle cx="440.3" cy="432.7" r="0.8" fill="#909090"/><circle cx="476.3" cy="392.5" r="0.8" fill="#909090"/><circle cx="460.5" cy="396.4" r="0.8" fill="#909090"/><circle cx="438.8" cy="446.8" r="0.8" fill="#909090"/><circle cx="439.5" cy="432.5" r="0.8" fill="#909090"/><circle cx="466.6" cy="392.4" r="0.8" fill="#909090"/><circle cx="439.9" cy="434.3" r="0.8" fill="#909090"/><circle cx="440.9" cy="426.0" r="0.8" fill="#909090"/><circle cx="443.5" cy="441.6" r="0.8" fill="#909090"/><circle cx="442.1" cy="429.7" r="0.8" fill="#909090"/><circle cx="438.8" cy="445.1" r="0.8" fill="#909090"/><circle cx="465.9" cy="399.8" r="0.8" fill="#909090"/><circle cx="461.9" cy="394.9" r="0.8" fill="#909090"/><circle cx="443.3" cy="434.8" r="0.8" fill="#909090"/><circle cx="442.6" cy="453.3" r="0.8" fill="#909090"/><circle cx="442.2" cy="427.5" r="0.8" fill="#909090"/><circle cx="447.1" cy="447.5" r="0.8" fill="#909090"/><circle cx="436.2" cy="436.1" r="0.8" fill="#909090"/><circle cx="445.7" cy="435.2" r="0.8" fill="#909090"/><circle cx="452.1" cy="407.7" r="0.8" fill="#909090"/><circle cx="473.6" cy="390.7" r="0.8" fill="#909090"/><circle cx="462.3" cy="399.9" r="0.8" fill="#909090"/><circle cx="461.8" cy="397.3" r="0.8" fill="#909090"/><circle cx="439.3" cy="449.1" r="0.8" fill="#909090"/><circle cx="446.4" cy="427.0" r="0.8" fill="#909090"/><circle cx="441.3" cy="448.7" r="0.8" fill="#909090"/><circle cx="453.1" cy="415.2" r="0.8" fill="#909090"/><circle cx="458.8" cy="396.9" r="0.8" fill="#909090"/><circle cx="456.2" cy="404.2" r="0.8" fill="#909090"/><circle cx="449.8" cy="403.8" r="0.8" fill="#909090"/><circle cx="449.9" cy="415.2" r="0.8" fill="#909090"/><circle cx="440.8" cy="437.4" r="0.8" fill="#909090"/><circle cx="436.1" cy="440.2" r="0.8" fill="#909090"/><circle cx="445.3" cy="447.2" r="0.8" fill="#909090"/><circle fill="url(#ball)" cx="459.5" cy="376.4" r="4.1"/><circle fill="url(#ball)" cx="465.9" cy="373.0" r="4.1"/><circle fill="url(#ball)" cx="472.4" cy="369.6" r="4.1"/><circle fill="url(#ball)" cx="478.8" cy="366.1" r="4.1"/><circle fill="url(#ball)" cx="485.3" cy="362.7" r="4.1"/><circle fill="url(#ball)" cx="491.7" cy="359.3" r="4.1"/><circle fill="url(#ball)" cx="498.1" cy="355.9" r="4.1"/><circle fill="url(#ball)" cx="504.6" cy="352.4" r="4.1"/><circle fill="url(#ball)" cx="459.2" cy="383.7" r="4.1"/><circle fill="url(#ball)" cx="465.7" cy="380.3" r="4.1"/><circle fill="url(#ball)" cx="472.1" cy="376.9" r="4.1"/><circle fill="url(#ball)" cx="478.6" cy="373.4" r="4.1"/><circle fill="url(#ball)" cx="485.0" cy="370.0" r="4.1"/><circle fill="url(#ball)" cx="491.4" cy="366.6" r="4.1"/><circle fill="url(#ball)" cx="497.9" cy="363.1" r="4.1"/><circle fill="url(#ball)" cx="504.3" cy="359.7" r="4.1"/><circle fill="url(#ball)" cx="510.8" cy="356.3" r="4.1"/><circle fill="url(#ball)" cx="471.9" cy="384.1" r="4.1"/><circle fill="url(#ball)" cx="478.3" cy="380.7" r="4.1"/><circle fill="url(#ball)" cx="484.7" cy="377.3" r="4.1"/><circle fill="url(#ball)" cx="491.2" cy="373.9" r="4.1"/><circle fill="url(#ball)" cx="497.6" cy="370.4" r="4.1"/><circle fill="url(#ball)" cx="504.1" cy="367.0" r="4.1"/><circle fill="url(#ball)" cx="510.5" cy="363.6" r="4.1"/><circle fill="url(#ball)" cx="478.0" cy="388.0" r="4.1"/><circle fill="url(#ball)" cx="484.5" cy="384.6" r="4.1"/><circle fill="url(#ball)" cx="490.9" cy="381.2" r="4.1"/><circle fill="url(#ball)" cx="497.4" cy="377.7" r="4.1"/><circle fill="url(#ball)" cx="503.8" cy="374.3" r="4.1"/><circle fill="url(#ball)" cx="510.3" cy="370.9" r="4.1"/><circle fill="url(#ball)" cx="497.1" cy="385.0" r="4.1"/><circle fill="url(#ball)" cx="503.6" cy="381.6" r="4.1"/><circle fill="url(#ball)" cx="510.0" cy="378.2" r="4.1"/><path fill="#c0c0c0" d="M478 362 L483 351 L489 356 L494 348 L500 356Z"/><path fill="#c8c8c8" d="M518.4 354.5 L518.9 355.2 L519.7 355.9 L520.6 356.7 L521.4 357.5 L522.2 358.3 L523.0 359.2 L523.6 360.1 L524.1 361.1 L524.8 362.2 L525.8 363.6 L526.7 365.2 L527.6 366.8 L528.5 368.5 L529.2 370.2 L529.7 371.7 L530.1 373.0 L530.5 374.2 L530.8 375.7 L530.9 377.5 L531.0 379.4 L530.9 381.2 L530.9 382.9 L530.9 384.5 L531.0 385.6 L537.0 386.4 L537.3 385.4 L537.8 384.1 L538.4 382.4 L538.9 380.4 L539.4 378.2 L539.8 375.9 L540.0 373.5 L539.9 371.0 L539.3 368.7 L538.5 366.5 L537.5 364.3 L536.5 362.2 L535.4 360.2 L534.2 358.3 L533.1 356.5 L531.9 354.9 L530.4 353.5 L528.8 352.4 L527.2 351.5 L525.7 350.8 L524.4 350.2 L523.2 349.9 L522.3 349.6 L521.6 349.5Z"/><path fill="none" stroke="#8c8c8c" stroke-width="1.0" stroke-linecap="round" d="M522.0 354.3 L523.0 355.0 L524.1 355.8 L525.2 356.7 L526.1 357.6 L527.0 358.8 L527.9 360.1 L528.9 361.6 L530.0 363.3 L531.0 365.1 L531.9 366.9 L532.7 368.8 L533.3 370.6 L533.8 372.2 L534.1 373.9 L534.2 375.8 L534.1 377.8 L533.9 379.7 L533.7 381.6"/><path fill="#fff" d="M458.6 402.9 L457.8 403.6 L456.8 404.7 L455.4 406.2 L454.0 407.9 L452.5 409.9 L451.1 412.1 L449.8 414.6 L449.0 417.4 L449.0 420.2 L449.4 422.8 L450.0 425.2 L450.9 427.5 L451.8 429.7 L452.8 431.7 L453.9 433.6 L455.1 435.4 L456.3 437.1 L457.8 438.7 L459.3 440.2 L460.9 441.5 L462.5 442.7 L464.2 443.8 L466.0 444.8 L467.7 445.6 L469.7 446.1 L471.7 446.5 L473.7 446.8 L475.7 447.0 L477.8 447.0 L479.8 446.8 L481.8 446.4 L484.0 445.6 L486.0 444.3 L487.6 442.6 L488.7 441.0 L489.6 439.4 L490.3 437.9 L490.8 436.6 L491.2 435.7 L491.4 435.1 L484.6 430.9 L484.0 431.6 L483.3 432.7 L482.6 433.7 L481.9 434.7 L481.2 435.6 L480.5 436.3 L480.1 436.5 L480.0 436.4 L479.7 436.3 L478.9 436.3 L477.9 436.2 L476.8 436.0 L475.6 435.7 L474.3 435.4 L473.2 434.9 L472.3 434.4 L471.3 434.0 L470.3 433.5 L469.3 432.8 L468.3 432.1 L467.3 431.3 L466.4 430.4 L465.7 429.6 L464.9 428.6 L464.2 427.4 L463.4 426.1 L462.7 424.6 L462.0 423.1 L461.5 421.7 L461.2 420.4 L461.0 419.3 L461.0 418.6 L460.9 417.9 L461.1 416.6 L461.6 415.1 L462.4 413.3 L463.3 411.6 L464.1 409.9 L464.9 408.4 L465.4 407.1Z"/><path fill="none" stroke="#8c8c8c" stroke-width="1.0" stroke-linecap="round" d="M457.1 410.0 L455.9 411.8 L454.8 413.8 L454.0 415.8 L453.5 417.9 L453.5 419.9 L453.8 421.9 L454.3 423.9 L455.0 425.9 L455.9 427.8 L456.8 429.6 L457.8 431.3 L458.8 432.9 L459.8 434.3 L461.0 435.6 L462.3 436.9 L463.6 438.0 L465.0 439.0 L466.5 439.9 L468.0 440.7 L469.4 441.4 L471.0 441.9 L472.7 442.4 L474.4 442.7 L476.1 442.9 L477.8 442.9 L479.5 442.9 L481.0 442.6 L482.5 442.2 L483.8 441.3 L484.9 440.2 L485.9 439.0"/><circle fill="url(#ball)" cx="476.5" cy="428.7" r="6"/><path fill="#fff" d="M488.2 414.7 L487.8 415.7 L487.1 417.0 L486.3 418.8 L485.4 420.8 L484.5 423.0 L483.8 425.3 L483.2 427.8 L483.0 430.3 L483.2 432.7 L483.7 434.8 L484.4 436.9 L485.3 438.9 L486.3 440.7 L487.5 442.4 L488.7 444.0 L490.1 445.5 L491.8 446.7 L493.6 447.7 L495.5 448.5 L497.5 449.2 L499.4 449.7 L501.4 450.0 L503.3 450.1 L505.3 450.0 L507.3 449.6 L509.2 449.0 L510.9 448.1 L512.6 447.2 L514.1 446.1 L515.5 444.9 L516.7 443.4 L517.7 441.5 L518.1 439.1 L517.7 437.1 L517.0 435.5 L516.2 434.1 L515.4 432.9 L514.6 431.9 L514.1 431.1 L513.7 430.7 L508.3 433.3 L508.6 434.1 L509.0 435.2 L509.5 436.2 L509.9 437.3 L510.3 438.2 L510.4 438.9 L510.3 439.0 L510.3 438.5 L510.3 438.2 L509.8 438.5 L509.1 438.9 L508.2 439.3 L507.2 439.7 L506.2 439.9 L505.3 440.1 L504.7 440.0 L504.1 439.9 L503.2 439.6 L502.2 439.3 L501.2 438.8 L500.2 438.3 L499.3 437.7 L498.5 437.1 L497.9 436.5 L497.2 435.9 L496.4 435.2 L495.6 434.3 L494.8 433.4 L494.2 432.4 L493.6 431.4 L493.2 430.5 L493.0 429.7 L492.9 428.8 L493.0 427.4 L493.4 425.7 L493.9 423.8 L494.4 421.9 L495.0 420.1 L495.5 418.5 L495.8 417.3Z"/><path fill="none" stroke="#8c8c8c" stroke-width="1.0" stroke-linecap="round" d="M488.6 421.9 L487.8 424.0 L487.2 426.1 L486.8 428.2 L486.8 430.1 L487.0 431.8 L487.4 433.6 L488.1 435.2 L488.9 436.8 L489.8 438.3 L490.8 439.7 L491.9 441.0 L493.0 442.1 L494.3 443.1 L495.7 444.0 L497.3 444.7 L498.8 445.3 L500.5 445.8 L502.0 446.1 L503.6 446.3 L505.1 446.2 L506.5 446.0 L508.0 445.6 L509.5 445.0 L510.9 444.2 L512.2 443.4 L513.3 442.5 L514.3 441.5 L514.9 440.4 L515.1 439.1 L514.9 437.8 L514.5 436.5"/><circle fill="url(#ball)" cx="525.4" cy="395.6" r="6"/><path fill="#d8d8d8" d="M523.6 401.7 L524.8 403.7 L526.5 406.4 L528.5 409.5 L530.8 413.1 L533.3 416.8 L536.1 420.7 L539.1 424.4 L542.2 427.8 L545.6 431.0 L549.3 434.2 L553.2 437.5 L557.2 440.6 L561.3 443.7 L565.3 446.5 L569.2 449.1 L573.0 451.4 L576.8 453.4 L580.7 455.1 L584.5 456.5 L588.2 457.7 L591.6 458.8 L594.6 459.6 L597.1 460.3 L599.0 460.8 L601.0 455.2 L599.1 454.4 L596.6 453.4 L593.7 452.3 L590.5 451.1 L587.2 449.8 L583.7 448.2 L580.3 446.5 L577.0 444.6 L573.6 442.4 L569.9 439.9 L566.0 437.2 L562.0 434.3 L558.2 431.2 L554.4 428.1 L550.9 425.1 L547.8 422.2 L544.9 419.2 L542.0 416.0 L539.1 412.5 L536.5 409.0 L534.0 405.7 L531.8 402.7 L530.0 400.2 L528.4 398.3Z"/><path fill="#d8d8d8" d="M525.7 404.9 L527.1 406.9 L529.0 409.5 L531.3 412.8 L533.9 416.3 L536.7 420.1 L539.8 423.9 L543.0 427.6 L546.3 430.9 L549.8 434.0 L553.5 437.1 L557.5 440.1 L561.5 443.0 L565.6 445.9 L569.6 448.5 L573.4 450.9 L577.1 453.0 L580.8 454.8 L584.6 456.2 L588.3 457.4 L591.9 458.4 L595.1 459.3 L598.0 459.9 L600.3 460.4 L602.1 460.9 L603.9 455.1 L602.1 454.4 L599.7 453.6 L596.9 452.8 L593.9 451.7 L590.7 450.6 L587.4 449.2 L584.1 447.7 L580.9 446.0 L577.5 444.0 L573.9 441.8 L570.0 439.2 L566.1 436.5 L562.3 433.7 L558.5 430.8 L554.9 427.9 L551.7 425.1 L548.6 422.2 L545.4 418.9 L542.3 415.5 L539.4 412.0 L536.6 408.6 L534.1 405.6 L532.0 403.0 L530.3 401.1Z"/><path fill="#d8d8d8" d="M527.7 408.0 L529.4 410.0 L531.5 412.7 L534.1 416.0 L537.0 419.6 L540.2 423.3 L543.5 427.1 L547.0 430.7 L550.4 434.0 L554.0 437.0 L557.8 439.9 L561.8 442.7 L565.8 445.5 L569.8 448.1 L573.8 450.5 L577.6 452.7 L581.2 454.6 L584.9 456.1 L588.6 457.4 L592.1 458.4 L595.5 459.1 L598.6 459.7 L601.3 460.2 L603.5 460.6 L605.2 460.9 L606.8 455.1 L605.0 454.5 L602.7 453.9 L600.1 453.2 L597.2 452.4 L594.2 451.4 L591.0 450.3 L587.9 449.0 L584.8 447.4 L581.5 445.7 L577.9 443.6 L574.1 441.3 L570.2 438.8 L566.3 436.2 L562.6 433.4 L558.9 430.7 L555.6 428.0 L552.3 425.1 L548.9 421.9 L545.5 418.5 L542.3 414.9 L539.2 411.6 L536.5 408.5 L534.1 405.9 L532.3 404.0Z"/><path fill="#d8d8d8" d="M529.8 411.1 L531.6 413.1 L534.0 415.9 L536.9 419.1 L540.1 422.8 L543.6 426.5 L547.2 430.3 L550.9 433.9 L554.5 437.1 L558.2 439.9 L562.1 442.7 L566.1 445.3 L570.1 447.9 L574.1 450.3 L578.0 452.5 L581.8 454.4 L585.4 456.2 L588.9 457.5 L592.5 458.5 L596.0 459.3 L599.2 459.8 L602.1 460.2 L604.7 460.5 L606.8 460.7 L608.4 460.9 L609.6 455.1 L607.9 454.6 L605.8 454.1 L603.3 453.6 L600.5 453.0 L597.6 452.2 L594.6 451.3 L591.6 450.2 L588.6 448.8 L585.4 447.3 L581.9 445.4 L578.1 443.3 L574.3 441.1 L570.4 438.6 L566.6 436.1 L562.9 433.5 L559.5 430.9 L556.0 428.1 L552.4 424.9 L548.7 421.5 L545.2 417.9 L541.8 414.5 L538.8 411.4 L536.2 408.8 L534.2 406.9Z"/><path fill="#d8d8d8" d="M531.9 414.2 L533.9 416.2 L536.5 419.0 L539.6 422.3 L543.2 426.0 L547.0 429.8 L550.9 433.5 L554.8 437.1 L558.6 440.2 L562.4 442.9 L566.4 445.5 L570.4 448.0 L574.4 450.3 L578.4 452.5 L582.3 454.4 L586.0 456.2 L589.5 457.7 L593.0 458.8 L596.5 459.7 L599.8 460.2 L602.9 460.5 L605.7 460.7 L608.1 460.8 L610.1 460.9 L611.6 461.0 L612.4 455.0 L610.8 454.7 L608.7 454.4 L606.4 454.0 L603.8 453.6 L601.1 453.1 L598.2 452.4 L595.4 451.5 L592.5 450.3 L589.3 448.9 L585.8 447.3 L582.1 445.4 L578.3 443.3 L574.5 441.1 L570.6 438.7 L566.9 436.3 L563.4 433.8 L559.8 431.1 L555.9 427.9 L551.9 424.5 L548.1 420.9 L544.4 417.5 L541.1 414.4 L538.2 411.8 L536.1 409.8Z"/><path fill="#d8d8d8" d="M534.0 417.2 L536.1 419.3 L539.0 422.1 L542.4 425.4 L546.3 429.1 L550.4 433.0 L554.6 436.7 L558.8 440.2 L562.7 443.3 L566.6 445.9 L570.6 448.3 L574.7 450.6 L578.7 452.7 L582.7 454.7 L586.6 456.4 L590.2 458.0 L593.7 459.3 L597.1 460.2 L600.5 460.8 L603.7 461.1 L606.7 461.2 L609.3 461.2 L611.6 461.1 L613.4 461.0 L614.8 461.0 L615.2 455.0 L613.7 454.8 L611.7 454.6 L609.5 454.4 L607.1 454.2 L604.5 453.9 L601.8 453.4 L599.1 452.7 L596.3 451.7 L593.2 450.5 L589.8 449.1 L586.1 447.4 L582.4 445.6 L578.5 443.6 L574.7 441.4 L570.9 439.1 L567.3 436.7 L563.5 434.1 L559.4 430.9 L555.2 427.5 L551.0 423.9 L547.0 420.5 L543.4 417.3 L540.3 414.7 L538.0 412.8Z"/><path fill="#fff" d="M522.5 441.8 L523.4 440.4 L524.5 438.4 L525.8 436.0 L527.2 433.4 L528.7 430.7 L530.2 428.0 L531.6 425.4 L532.9 423.2 L533.9 421.0 L534.9 418.8 L535.9 416.7 L536.9 414.7 L537.8 412.8 L538.7 411.0 L539.6 409.3 L540.4 407.8 L541.3 406.4 L542.2 405.1 L543.1 403.9 L544.1 402.7 L545.0 401.7 L545.8 400.7 L546.5 399.8 L547.0 399.1 L545.0 396.9 L544.3 397.3 L543.4 397.9 L542.3 398.6 L541.0 399.4 L539.7 400.4 L538.3 401.5 L537.0 402.8 L535.6 404.2 L534.3 405.7 L533.0 407.3 L531.7 409.1 L530.4 410.9 L529.1 412.8 L527.7 414.8 L526.4 416.8 L525.1 418.8 L523.8 421.2 L522.5 423.9 L521.1 426.7 L519.7 429.5 L518.3 432.2 L517.2 434.6 L516.2 436.6 L515.5 438.2Z"/><path fill="none" stroke="#8c8c8c" stroke-width="1.0" stroke-linecap="round" d="M523.0 434.6 L524.4 431.9 L525.8 429.2 L527.3 426.4 L528.7 423.8 L530.0 421.5 L531.1 419.4 L532.2 417.3 L533.3 415.3 L534.4 413.3 L535.5 411.4 L536.6 409.6 L537.6 408.0 L538.6 406.4 L539.6 405.1 L540.7 403.8 L541.9 402.6 L542.9 401.5 L544.0 400.5"/><path fill="#fff" d="M535.8 444.0 L536.7 443.0 L537.9 441.7 L539.2 440.1 L540.7 438.2 L542.2 436.3 L543.8 434.3 L545.3 432.3 L546.7 430.5 L547.8 428.5 L548.9 426.5 L549.9 424.4 L550.9 422.5 L551.8 420.6 L552.7 418.8 L553.6 417.2 L554.3 415.9 L555.1 414.7 L555.8 413.7 L556.6 412.8 L557.4 411.9 L558.2 411.1 L558.9 410.4 L559.5 409.8 L559.9 409.2 L558.1 406.8 L557.5 407.0 L556.7 407.4 L555.8 407.8 L554.7 408.3 L553.5 409.0 L552.3 409.9 L551.0 410.9 L549.7 412.1 L548.4 413.5 L547.1 415.1 L545.8 416.8 L544.5 418.5 L543.2 420.4 L541.9 422.1 L540.6 423.9 L539.3 425.5 L538.1 427.3 L536.9 429.4 L535.5 431.5 L534.2 433.5 L532.9 435.5 L531.8 437.3 L530.8 438.8 L530.2 440.0Z"/><path fill="none" stroke="#8c8c8c" stroke-width="1.0" stroke-linecap="round" d="M536.8 438.3 L538.2 436.5 L539.7 434.5 L541.2 432.4 L542.6 430.5 L543.9 428.6 L545.1 426.8 L546.2 424.9 L547.4 422.9 L548.5 421.0 L549.6 419.1 L550.6 417.4 L551.6 415.8 L552.6 414.5 L553.5 413.3 L554.5 412.3 L555.5 411.4 L556.4 410.6 L557.3 409.9"/><path fill="#fff" d="M548.5 449.5 L549.4 448.7 L550.7 447.7 L552.1 446.4 L553.8 445.0 L555.5 443.5 L557.2 441.9 L558.8 440.5 L560.3 439.1 L561.4 437.6 L562.5 436.1 L563.6 434.6 L564.7 433.1 L565.7 431.7 L566.6 430.4 L567.4 429.1 L568.2 428.0 L568.9 427.0 L569.5 426.1 L570.1 425.3 L570.6 424.5 L571.1 423.8 L571.5 423.1 L571.8 422.6 L572.1 422.1 L569.9 419.9 L569.5 420.1 L568.9 420.4 L568.2 420.8 L567.5 421.3 L566.7 421.8 L565.8 422.4 L564.8 423.2 L563.8 424.0 L562.7 424.9 L561.6 425.9 L560.3 427.0 L559.1 428.1 L557.8 429.3 L556.4 430.5 L555.1 431.7 L553.7 432.9 L552.5 434.3 L551.1 435.9 L549.6 437.6 L548.1 439.3 L546.7 440.9 L545.4 442.3 L544.3 443.6 L543.5 444.5Z"/><path fill="none" stroke="#8c8c8c" stroke-width="1.0" stroke-linecap="round" d="M550.1 444.3 L551.6 442.8 L553.3 441.3 L554.9 439.7 L556.4 438.2 L557.8 436.8 L559.0 435.4 L560.2 434.0 L561.4 432.6 L562.6 431.2 L563.7 429.9 L564.7 428.7 L565.7 427.5 L566.5 426.5 L567.4 425.6 L568.1 424.7 L568.8 424.0 L569.5 423.3 L570.0 422.7"/><path fill="#fff" d="M526.9 439.8 L528.3 440.6 L530.2 441.5 L532.4 442.7 L535.0 443.9 L537.7 445.2 L540.6 446.6 L543.5 447.9 L546.4 449.2 L549.3 450.3 L552.4 451.4 L555.7 452.7 L559.1 454.0 L562.6 455.2 L566.2 456.3 L569.7 457.2 L573.3 457.9 L577.1 458.2 L581.0 458.1 L584.9 457.9 L588.7 457.6 L592.3 457.1 L595.5 456.7 L598.1 456.3 L600.1 456.0 L599.9 452.0 L597.9 451.8 L595.2 451.7 L592.0 451.6 L588.5 451.6 L584.9 451.4 L581.2 451.1 L577.8 450.7 L574.7 450.1 L571.7 449.4 L568.6 448.4 L565.4 447.3 L562.1 446.0 L558.9 444.7 L555.7 443.3 L552.6 442.0 L549.6 440.8 L546.6 439.9 L543.6 438.9 L540.6 437.9 L537.8 437.0 L535.1 436.1 L532.7 435.3 L530.7 434.7 L529.1 434.2Z"/><path fill="none" stroke="#8c8c8c" stroke-width="1.0" stroke-linecap="round" d="M533.4 440.2 L536.0 441.3 L538.8 442.5 L541.7 443.7 L544.7 444.9 L547.6 446.1 L550.6 447.2 L553.7 448.4 L556.9 449.7 L560.2 451.0 L563.6 452.2 L567.1 453.3 L570.5 454.3 L573.8 455.0 L577.3 455.4 L581.1 455.5 L584.9 455.5 L588.7 455.3 L592.2 455.1"/><path fill="#fff" d="M558.8 429.1 L558.7 428.1 L558.3 426.8 L557.9 425.4 L557.5 423.9 L557.2 422.4 L556.9 421.1 L556.9 420.0 L557.0 419.3 L557.2 418.6 L557.6 417.8 L558.1 416.9 L558.7 416.0 L559.3 415.2 L559.9 414.6 L560.4 414.3 L560.7 414.2 L560.8 414.2 L561.2 414.0 L561.7 414.0 L562.4 413.9 L563.1 414.0 L563.7 414.1 L564.3 414.3 L564.7 414.4 L565.1 414.6 L565.8 414.9 L566.4 415.4 L567.1 416.0 L567.8 416.7 L568.3 417.4 L568.8 418.1 L569.1 418.7 L569.2 419.4 L569.3 420.6 L569.2 422.1 L569.0 423.7 L568.7 425.4 L568.4 426.9 L568.2 428.3 L568.1 429.4 L573.9 430.6 L574.2 429.8 L574.7 428.6 L575.2 427.0 L575.8 425.3 L576.3 423.4 L576.7 421.4 L577.0 419.4 L576.9 417.3 L576.5 415.4 L575.9 413.6 L575.2 412.0 L574.2 410.5 L573.2 409.1 L572.0 407.8 L570.8 406.6 L569.3 405.6 L567.7 404.9 L566.0 404.4 L564.3 404.1 L562.5 403.9 L560.7 404.0 L558.9 404.3 L557.1 404.9 L555.3 405.8 L553.8 407.1 L552.7 408.5 L551.7 410.0 L550.8 411.6 L550.1 413.3 L549.6 415.0 L549.2 416.8 L549.0 418.7 L549.2 420.7 L549.6 422.6 L550.2 424.5 L550.9 426.2 L551.6 427.8 L552.2 429.1 L552.8 430.2 L553.2 430.9Z"/><path fill="none" stroke="#8c8c8c" stroke-width="1.0" stroke-linecap="round" d="M555.0 424.8 L554.5 423.2 L554.2 421.7 L554.0 420.3 L554.0 419.1 L554.2 417.9 L554.6 416.7 L555.1 415.5 L555.7 414.4 L556.4 413.3 L557.2 412.3 L558.0 411.6 L558.7 411.1 L559.4 410.7 L560.3 410.4 L561.3 410.2 L562.4 410.2 L563.5 410.3 L564.6 410.4 L565.6 410.7 L566.4 411.1 L567.2 411.6 L568.1 412.2 L569.0 413.0 L569.8 413.9 L570.5 414.9 L571.2 416.0 L571.7 417.1 L572.0 418.2 L572.2 419.4 L572.1 420.9 L571.9 422.6"/><path fill="#fff" d="M576.8 445.0 L576.6 444.0 L576.3 442.7 L575.8 441.3 L575.4 439.7 L575.0 438.2 L574.8 436.9 L574.8 436.0 L574.9 435.8 L575.0 435.7 L575.3 435.2 L575.8 434.6 L576.4 434.1 L577.0 433.6 L577.7 433.2 L578.1 433.0 L578.1 433.0 L578.0 432.9 L578.4 432.9 L579.3 433.3 L580.3 433.9 L581.4 434.6 L582.5 435.3 L583.4 436.0 L584.2 436.4 L587.8 431.6 L587.3 431.1 L586.6 430.3 L585.7 429.4 L584.6 428.3 L583.3 427.3 L581.8 426.3 L580.1 425.4 L577.9 425.0 L575.9 425.4 L574.2 426.0 L572.7 426.9 L571.3 427.9 L569.9 429.2 L568.8 430.6 L567.8 432.2 L567.1 434.2 L567.0 436.4 L567.4 438.4 L568.0 440.3 L568.8 442.0 L569.5 443.7 L570.2 445.1 L570.8 446.2 L571.2 447.0Z"/><path fill="#fff" d="M543.6 357.5 L544.0 357.0 L544.6 356.3 L545.4 355.3 L546.3 354.2 L547.2 352.9 L548.0 351.5 L548.7 349.8 L549.0 347.8 L548.8 345.9 L548.3 344.3 L547.5 342.8 L546.7 341.5 L545.7 340.3 L544.5 339.2 L543.3 338.2 L541.8 337.3 L540.1 336.8 L538.5 336.6 L536.9 336.6 L535.3 336.7 L533.8 337.0 L532.2 337.4 L530.7 338.0 L529.3 338.8 L527.9 339.7 L526.7 340.8 L525.6 341.9 L524.6 343.2 L523.8 344.6 L523.0 346.0 L522.5 347.6 L522.0 349.3 L521.9 351.0 L522.0 352.8 L522.1 354.5 L522.4 356.2 L522.8 357.9 L523.3 359.6 L524.0 361.3 L524.8 362.9 L525.6 364.4 L526.5 365.9 L527.5 367.2 L528.7 368.5 L530.0 369.7 L531.4 370.7 L532.9 371.7 L534.5 372.5 L536.2 373.1 L537.9 373.6 L539.8 374.0 L541.6 374.2 L543.6 374.4 L545.6 374.4 L547.6 374.2 L549.7 373.8 L551.8 373.1 L553.6 372.3 L555.2 371.3 L556.7 370.3 L558.0 369.3 L559.1 368.3 L560.3 367.4 L561.5 366.4 L562.9 365.2 L564.3 363.9 L565.7 362.6 L567.1 361.2 L568.5 359.9 L569.8 358.7 L571.1 357.5 L572.4 356.4 L573.8 355.2 L575.2 353.9 L576.7 352.7 L578.2 351.4 L579.7 350.3 L581.1 349.2 L582.5 348.2 L583.8 347.3 L585.0 346.6 L586.2 345.9 L587.4 345.4 L588.6 344.8 L589.9 344.3 L591.3 343.8 L592.7 343.3 L594.1 342.9 L595.6 342.4 L597.3 342.0 L599.1 341.6 L600.9 341.2 L602.6 340.9 L604.2 340.5 L605.5 340.2 L606.6 340.0 L605.4 332.0 L604.4 332.1 L603.1 332.1 L601.5 332.2 L599.6 332.3 L597.7 332.4 L595.7 332.6 L593.7 332.9 L591.9 333.1 L590.2 333.4 L588.7 333.7 L587.0 334.0 L585.4 334.3 L583.7 334.7 L581.9 335.3 L580.1 335.9 L578.2 336.7 L576.3 337.6 L574.4 338.6 L572.5 339.7 L570.7 340.8 L568.8 342.0 L567.0 343.2 L565.3 344.4 L563.6 345.6 L562.0 346.9 L560.3 348.4 L558.8 349.8 L557.4 351.1 L556.1 352.4 L554.8 353.6 L553.7 354.7 L552.5 355.6 L551.3 356.6 L550.2 357.6 L549.2 358.4 L548.3 359.1 L547.6 359.6 L547.1 359.9 L546.7 360.1 L546.3 360.2 L545.8 360.3 L545.0 360.4 L544.1 360.4 L543.1 360.3 L542.1 360.1 L541.1 359.9 L540.2 359.7 L539.5 359.5 L538.9 359.3 L538.3 359.2 L537.7 358.9 L537.2 358.6 L536.6 358.3 L536.1 357.9 L535.7 357.5 L535.2 357.1 L535.0 356.5 L534.7 355.8 L534.4 354.9 L534.2 353.9 L534.0 352.9 L533.9 352.0 L533.9 351.2 L534.0 350.7 L533.9 350.3 L533.9 349.8 L534.0 349.2 L534.1 348.7 L534.3 348.2 L534.5 347.8 L534.7 347.4 L534.7 347.2 L534.9 347.1 L535.4 346.9 L535.9 346.8 L536.6 346.6 L537.2 346.6 L537.8 346.6 L538.1 346.6 L538.2 346.7 L538.4 346.6 L538.8 346.8 L539.3 347.0 L539.8 347.4 L540.3 347.8 L540.7 348.1 L540.9 348.3 L541.0 348.2 L541.1 348.1 L541.1 348.6 L540.8 349.5 L540.3 350.6 L539.8 351.7 L539.2 352.7 L538.7 353.7 L538.4 354.5Z"/><path fill="none" stroke="#8c8c8c" stroke-width="1.0" stroke-linecap="round" d="M544.8 344.7 L544.1 343.7 L543.3 342.8 L542.4 342.0 L541.4 341.3 L540.4 340.8 L539.4 340.5 L538.2 340.4 L537.0 340.3 L535.8 340.4 L534.6 340.7 L533.4 341.0 L532.3 341.4 L531.3 342.0 L530.4 342.6 L529.6 343.4 L528.9 344.3 L528.2 345.3 L527.6 346.3 L527.1 347.4 L526.8 348.6 L526.5 349.8 L526.4 351.1 L526.5 352.5 L526.6 353.9 L526.8 355.4 L527.2 356.8 L527.6 358.2 L528.1 359.5 L528.7 360.7 L529.3 361.8 L530.1 362.9 L530.9 363.9 L531.9 364.8 L532.9 365.6 L534.0 366.4 L535.1 367.1 L536.4 367.6 L537.7 368.1 L539.1 368.5 L540.6 368.8 L542.2 369.0 L543.8 369.1 L545.4 369.1 L546.9 369.0 L548.4 368.7 L549.8 368.2 L551.2 367.6 L552.4 366.9 L553.5 366.1 L554.7 365.2 L555.8 364.3 L556.9 363.3 L558.1 362.3 L559.4 361.3 L560.8 360.0 L562.1 358.8 L563.5 357.4 L564.8 356.1 L566.2 354.8 L567.7 353.6 L569.1 352.4 L570.6 351.1 L572.2 349.9 L573.8 348.7 L575.4 347.5 L577.0 346.3 L578.6 345.2 L580.2 344.2 L581.7 343.3 L583.2 342.6 L584.6 341.9 L586.0 341.4 L587.4 340.9 L588.8 340.4 L590.3 340.0"/><circle fill="url(#ball)" cx="554.9" cy="345.2" r="4.5"/><circle fill="url(#ball)" cx="582.8" cy="334.3" r="5"/><path fill="#c8c8c8" d="M553.8 377.7 L555.4 376.2 L557.5 374.2 L559.9 371.7 L562.6 369.1 L565.4 366.3 L568.4 363.5 L571.3 361.0 L574.2 358.8 L577.1 356.5 L580.4 354.1 L584.1 351.7 L587.8 349.3 L591.3 347.1 L594.5 345.2 L597.3 343.5 L599.3 342.2 L596.7 337.8 L594.6 338.9 L591.8 340.4 L588.5 342.2 L584.7 344.2 L580.8 346.3 L576.9 348.6 L573.2 350.9 L569.8 353.2 L566.8 355.9 L563.9 358.8 L561.0 361.9 L558.2 364.9 L555.7 367.8 L553.4 370.5 L551.6 372.6 L550.2 374.3Z"/><path fill="#c8c8c8" d="M557.9 374.7 L559.5 373.1 L561.6 370.9 L564.0 368.2 L566.7 365.4 L569.5 362.4 L572.5 359.6 L575.4 356.9 L578.1 354.8 L580.9 352.6 L584.1 350.5 L587.6 348.4 L591.1 346.3 L594.5 344.5 L597.6 342.8 L600.2 341.4 L602.2 340.2 L599.8 335.8 L597.8 336.7 L595.2 337.9 L591.9 339.3 L588.4 341.0 L584.6 342.9 L580.8 344.9 L577.2 347.0 L573.9 349.2 L570.9 351.9 L567.9 354.9 L565.0 358.1 L562.2 361.4 L559.6 364.5 L557.4 367.3 L555.5 369.6 L554.1 371.3Z"/><path fill="#c8c8c8" d="M561.9 371.6 L563.5 369.9 L565.6 367.6 L568.1 364.8 L570.8 361.7 L573.7 358.6 L576.6 355.6 L579.5 352.9 L582.1 350.8 L584.8 348.8 L587.8 346.9 L591.1 345.1 L594.5 343.4 L597.7 341.8 L600.7 340.5 L603.2 339.3 L605.0 338.3 L603.0 333.7 L601.1 334.5 L598.5 335.4 L595.5 336.5 L592.0 337.9 L588.4 339.4 L584.7 341.2 L581.2 343.1 L577.9 345.2 L574.9 347.9 L571.9 351.1 L569.0 354.4 L566.2 357.8 L563.6 361.1 L561.4 364.1 L559.5 366.6 L558.1 368.4Z"/><path fill="#c8c8c8" d="M565.9 368.6 L567.6 366.8 L569.7 364.2 L572.2 361.3 L574.9 358.0 L577.8 354.7 L580.7 351.6 L583.5 348.9 L586.1 346.8 L588.6 345.0 L591.5 343.3 L594.6 341.7 L597.8 340.4 L600.9 339.2 L603.7 338.1 L606.1 337.2 L607.9 336.3 L606.1 331.7 L604.3 332.2 L601.9 332.9 L599.0 333.7 L595.7 334.7 L592.2 336.0 L588.6 337.4 L585.2 339.2 L581.9 341.2 L578.9 344.0 L575.9 347.2 L573.0 350.7 L570.2 354.2 L567.6 357.7 L565.4 360.9 L563.5 363.5 L562.1 365.4Z"/><ellipse fill="url(#ball)" cx="559.6" cy="384.5" rx="7.5" ry="9" transform="rotate(-10 559.6 384.5)"/><ellipse fill="url(#ball)" cx="543.5" cy="380" rx="7" ry="8" transform="rotate(-10 543.5 380)"/><path fill="#b0b0b0" d="M623 352 A54 48 0 0 0 623 448 L623 420 A29 27 0 0 1 623 366 Z"/><path stroke="#f0f0f0" stroke-width="1.6" d="M616.6 424.4 L612.6 442.0"/><path stroke="#505050" stroke-width="0.8" d="M617.1 425.8 L613.1 443.4"/><path stroke="#f0f0f0" stroke-width="1.6" d="M610.8 422.8 L603.3 439.4"/><path stroke="#505050" stroke-width="0.8" d="M611.3 424.2 L603.8 440.8"/><path stroke="#f0f0f0" stroke-width="1.6" d="M605.5 420.3 L594.8 435.2"/><path stroke="#505050" stroke-width="0.8" d="M606.0 421.7 L595.3 436.6"/><path stroke="#f0f0f0" stroke-width="1.6" d="M600.9 416.9 L587.4 429.6"/><path stroke="#505050" stroke-width="0.8" d="M601.4 418.3 L587.9 431.0"/><path stroke="#f0f0f0" stroke-width="1.6" d="M597.1 412.9 L581.3 422.8"/><path stroke="#505050" stroke-width="0.8" d="M597.6 414.3 L581.8 424.2"/><path stroke="#f0f0f0" stroke-width="1.6" d="M594.3 408.2 L576.7 415.1"/><path stroke="#505050" stroke-width="0.8" d="M594.8 409.6 L577.2 416.5"/><path stroke="#f0f0f0" stroke-width="1.6" d="M592.6 403.2 L573.9 406.7"/><path stroke="#505050" stroke-width="0.8" d="M593.1 404.6 L574.4 408.1"/><path stroke="#f0f0f0" stroke-width="1.6" d="M592.0 398.0 L573.0 398.0"/><path stroke="#505050" stroke-width="0.8" d="M592.5 399.4 L573.5 399.4"/><path stroke="#f0f0f0" stroke-width="1.6" d="M592.6 392.8 L573.9 389.3"/><path stroke="#505050" stroke-width="0.8" d="M593.1 394.2 L574.4 390.7"/><path stroke="#f0f0f0" stroke-width="1.6" d="M594.3 387.8 L576.7 380.9"/><path stroke="#505050" stroke-width="0.8" d="M594.8 389.2 L577.2 382.3"/><path stroke="#f0f0f0" stroke-width="1.6" d="M597.1 383.1 L581.3 373.2"/><path stroke="#505050" stroke-width="0.8" d="M597.6 384.5 L581.8 374.6"/><path stroke="#f0f0f0" stroke-width="1.6" d="M600.9 379.1 L587.4 366.4"/><path stroke="#505050" stroke-width="0.8" d="M601.4 380.5 L587.9 367.8"/><path stroke="#f0f0f0" stroke-width="1.6" d="M605.5 375.7 L594.8 360.8"/><path stroke="#505050" stroke-width="0.8" d="M606.0 377.1 L595.3 362.2"/><path stroke="#f0f0f0" stroke-width="1.6" d="M610.8 373.2 L603.3 356.6"/><path stroke="#505050" stroke-width="0.8" d="M611.3 374.6 L603.8 358.0"/><path stroke="#f0f0f0" stroke-width="1.6" d="M616.6 371.6 L612.6 354.0"/><path stroke="#505050" stroke-width="0.8" d="M617.1 373.0 L613.1 355.4"/><path fill="none" stroke="#ffffff" stroke-width="3" d="M603 356 A52 46 0 0 0 603 444"/><path fill="none" stroke="#ffffff" stroke-width="2" d="M610 368 A30 27 0 0 0 610 418"/><circle fill="url(#ball)" cx="601" cy="360.5" r="11.5"/><circle cx="601" cy="360.5" r="7.5" fill="none" stroke="#707070" stroke-width="1.2"/><circle cx="601" cy="360.5" r="3.5" fill="#ffffff"/><circle fill="url(#ball)" cx="603.5" cy="424.6" r="9"/><circle cx="603.5" cy="424.6" r="5.5" fill="none" stroke="#707070" stroke-width="1.1"/><rect x="615" y="340" width="8" height="28" fill="#d8d8d8"/><path d="M619 345 V366" stroke="#808080" stroke-width="1"/><ellipse fill="url(#ball)" cx="623" cy="338" rx="8.5" ry="10" transform="rotate(0 623 338)"/><path fill="#fff" d="M587.1 335.0 L588.3 335.2 L589.8 335.4 L591.6 335.5 L593.5 335.6 L595.5 335.8 L597.3 336.1 L598.8 336.4 L599.8 336.9 L600.8 337.2 L601.8 337.6 L602.9 338.1 L603.9 338.8 L604.9 339.5 L605.9 340.2 L606.8 340.9 L607.5 341.6 L608.1 341.9 L608.8 342.3 L609.4 342.9 L610.0 343.6 L610.6 344.3 L611.2 345.1 L611.8 345.8 L612.3 346.3 L617.7 343.7 L617.7 343.1 L617.6 342.4 L617.5 341.4 L617.2 340.2 L616.8 338.8 L616.3 337.4 L615.5 335.9 L614.5 334.4 L613.3 333.4 L612.1 332.4 L610.8 331.4 L609.3 330.4 L607.7 329.4 L606.0 328.5 L604.2 327.8 L602.2 327.1 L599.9 327.0 L597.6 327.1 L595.4 327.3 L593.2 327.6 L591.2 328.0 L589.4 328.4 L587.9 328.7 L586.9 329.0Z"/><path fill="none" stroke="#8c8c8c" stroke-width="1.0" stroke-linecap="round" d="M591.5 332.7 L593.4 332.6 L595.4 332.6 L597.4 332.7 L599.2 332.9 L600.7 333.2 L602.1 333.6 L603.4 334.2 L604.7 334.9 L605.9 335.6 L607.1 336.4 L608.2 337.3 L609.2 338.1 L610.1 338.9 L610.9 339.6 L611.6 340.5 L612.2 341.4 L612.7 342.3 L613.2 343.2"/><rect x="614" y="418" width="9" height="40" fill="#d0d0d0"/><path d="M617.5 422 V452 M621 420 V454" stroke="#808080" stroke-width="1"/><circle fill="url(#ball)" cx="606.8" cy="451.7" r="5.5"/><circle fill="url(#ball)" cx="623" cy="457.4" r="6"/><path fill="#fff" d="M568.8 430.0 L568.6 429.1 L568.3 427.8 L567.9 426.3 L567.4 424.8 L567.1 423.4 L566.9 422.0 L566.8 421.0 L567.0 420.5 L567.2 420.1 L567.6 419.4 L568.2 418.7 L568.8 418.0 L569.5 417.4 L570.2 416.9 L570.8 416.6 L571.1 416.5 L571.3 416.5 L571.7 416.4 L572.4 416.4 L573.1 416.4 L573.8 416.5 L574.4 416.7 L574.8 416.9 L575.0 417.0 L575.2 417.0 L575.7 417.4 L576.2 418.0 L576.7 418.8 L577.2 419.6 L577.5 420.5 L577.8 421.3 L578.0 421.9 L578.1 422.5 L577.9 423.5 L577.6 424.7 L577.1 426.1 L576.6 427.4 L576.0 428.7 L575.6 429.8 L575.3 430.7 L580.7 433.3 L581.2 432.6 L581.8 431.7 L582.6 430.5 L583.4 429.1 L584.3 427.5 L585.0 425.8 L585.7 424.0 L586.0 422.1 L586.0 420.2 L585.8 418.5 L585.4 416.8 L584.9 415.1 L584.3 413.5 L583.4 411.9 L582.4 410.4 L581.0 409.0 L579.4 408.0 L577.7 407.3 L576.0 406.8 L574.2 406.5 L572.4 406.4 L570.6 406.5 L568.7 406.8 L566.9 407.5 L565.3 408.5 L564.0 409.7 L562.8 411.0 L561.7 412.5 L560.7 414.1 L560.0 415.7 L559.4 417.5 L559.0 419.5 L559.1 421.6 L559.5 423.6 L560.1 425.4 L560.8 427.2 L561.5 428.8 L562.2 430.1 L562.8 431.2 L563.2 432.0Z"/><path fill="none" stroke="#8c8c8c" stroke-width="1.0" stroke-linecap="round" d="M565.0 425.7 L564.5 424.1 L564.1 422.6 L563.9 421.2 L564.0 420.1 L564.3 419.1 L564.8 418.0 L565.4 417.0 L566.1 415.9 L567.0 415.0 L567.9 414.2 L568.7 413.6 L569.5 413.1 L570.3 412.8 L571.3 412.7 L572.4 412.6 L573.5 412.7 L574.6 412.9 L575.6 413.2 L576.5 413.5 L577.2 414.0 L577.9 414.6 L578.6 415.4 L579.2 416.3 L579.8 417.4 L580.3 418.6 L580.6 419.7 L580.9 420.9 L581.0 422.0 L580.9 423.1 L580.6 424.4 L580.1 425.8"/><path fill="#fff" d="M576.9 447.3 L576.8 446.3 L576.5 445.0 L576.2 443.5 L575.9 442.0 L575.7 440.6 L575.6 439.3 L575.7 438.5 L575.8 438.2 L576.1 437.9 L576.6 437.3 L577.4 436.7 L578.2 436.0 L579.1 435.5 L579.9 435.1 L580.7 434.9 L581.1 434.9 L581.4 434.9 L582.0 434.9 L582.8 435.0 L583.7 435.3 L584.7 435.6 L585.5 436.0 L586.3 436.4 L586.6 436.7 L586.7 436.8 L586.8 437.0 L587.0 437.6 L587.3 438.6 L587.7 439.8 L588.2 441.4 L588.9 443.1 L589.9 444.8 L591.1 446.2 L592.5 447.5 L593.8 448.7 L595.2 449.8 L596.5 450.9 L597.6 451.7 L598.6 452.4 L599.2 452.9 L604.8 447.1 L604.2 446.4 L603.3 445.4 L602.4 444.4 L601.3 443.3 L600.3 442.1 L599.4 441.0 L598.6 440.0 L598.1 439.2 L597.8 438.7 L597.6 438.0 L597.3 437.0 L596.9 435.8 L596.5 434.4 L595.9 432.7 L594.8 430.9 L593.4 429.3 L591.8 428.1 L590.2 427.2 L588.5 426.4 L586.8 425.7 L584.9 425.2 L583.0 424.9 L581.0 424.9 L578.9 425.1 L577.0 425.8 L575.3 426.8 L573.8 427.9 L572.3 429.2 L571.0 430.6 L569.9 432.2 L568.9 433.9 L568.2 435.8 L567.9 438.0 L568.1 440.1 L568.6 442.0 L569.1 443.8 L569.7 445.5 L570.3 446.9 L570.8 448.0 L571.1 448.7Z"/><path fill="none" stroke="#8c8c8c" stroke-width="1.0" stroke-linecap="round" d="M573.3 442.7 L573.0 441.1 L572.8 439.6 L572.8 438.3 L573.0 437.3 L573.4 436.4 L574.1 435.4 L575.0 434.4 L576.0 433.5 L577.1 432.7 L578.2 432.0 L579.3 431.5 L580.3 431.2 L581.2 431.1 L582.4 431.1 L583.6 431.4 L584.9 431.7 L586.1 432.1 L587.3 432.7 L588.3 433.3 L589.2 433.9 L589.7 434.6 L590.2 435.4 L590.6 436.4 L590.9 437.5 L591.3 438.8 L591.7 440.1 L592.2 441.4 L593.0 442.7 L593.9 443.9 L595.0 445.1 L596.2 446.2"/><ellipse fill="#000" cx="442" cy="436" rx="2.5" ry="6" transform="rotate(10 442 436)"/><path fill="#000" d="M463 418 L472 414 L484 418 L478 424 L466 426Z"/><path fill="#000" d="M499 431 L511 428 L524 432 L522 440 L508 443 L499 439Z"/><path fill="#000" d="M517 375 L524 383 L534 386 L544 392 L551 401 L553 411 L546 411 L537 401 L528 395 L518 394 L508 393 L514 386Z"/><ellipse fill="#000" cx="569" cy="424" rx="3" ry="5.5" transform="rotate(0 569 424)"/><path fill="#000" d="M588 461 L600 456 L611 457.5 L616 462 L588 462Z"/><path fill="#000" d="M563 398 L572 395 L576 412 L566 416Z"/><ellipse fill="#000" cx="462" cy="442" rx="3" ry="6" transform="rotate(0 462 442)"/></g>
</defs>
<rect x="322" y="321" width="602" height="283" fill="#ffffb0"/>
<g filter="url(#relief)">
<rect x="322" y="321" width="602" height="283" fill="#000"/>
<use href="#q"/>
<use href="#q" transform="translate(1246 0) scale(-1 1)"/>
<use href="#q" transform="translate(0 924) scale(1 -1)"/>
<use href="#q" transform="translate(1246 924) scale(-1 -1)"/>
<ellipse cx="623" cy="392.5" rx="28" ry="26" fill="url(#sph)"/><ellipse cx="623" cy="531.5" rx="28" ry="26" fill="url(#sph)"/>
</g>
<radialGradient id="sph2" cx="0.5" cy="0.5" r="0.5"><stop offset="0" stop-color="#fbfbc0"/><stop offset="0.22" stop-color="#f0eea8"/><stop offset="0.38" stop-color="#a8a656"/><stop offset="0.75" stop-color="#8a883e"/><stop offset="0.93" stop-color="#6a6830"/><stop offset="1" stop-color="#4a4820"/></radialGradient>
<g fill="none" stroke="#dcdca6" stroke-width="3.5" opacity="0.55">
<path d="M583.2 370.4 L580.7 373.3 L578.4 376.3 L576.5 379.5 L574.8 382.8 L573.4 386.2 L572.3 389.7 L571.6 393.2 L571.1 396.8 L571.0 400.4 L571.2 404.0 L571.7 407.6 L572.5 411.1 L573.7 414.6 L575.1 418.0 L576.9 421.2 L578.9 424.4 L581.2 427.4 L583.8 430.2 L586.6 432.8 L589.6 435.2"/>
<path d="M589.6 488.8 L586.6 491.2 L583.8 493.8 L581.2 496.6 L578.9 499.6 L576.9 502.8 L575.1 506.0 L573.7 509.4 L572.5 512.9 L571.7 516.4 L571.2 520.0 L571.0 523.6 L571.1 527.2 L571.6 530.8 L572.3 534.3 L573.4 537.8 L574.8 541.2 L576.5 544.5 L578.4 547.7 L580.7 550.7 L583.2 553.6"/>
<path d="M662.8 370.4 L665.3 373.3 L667.6 376.3 L669.5 379.5 L671.2 382.8 L672.6 386.2 L673.7 389.7 L674.4 393.2 L674.9 396.8 L675.0 400.4 L674.8 404.0 L674.3 407.6 L673.5 411.1 L672.3 414.6 L670.9 418.0 L669.1 421.2 L667.1 424.4 L664.8 427.4 L662.2 430.2 L659.4 432.8 L656.4 435.2"/>
<path d="M656.4 488.8 L659.4 491.2 L662.2 493.8 L664.8 496.6 L667.1 499.6 L669.1 502.8 L670.9 506.0 L672.3 509.4 L673.5 512.9 L674.3 516.4 L674.8 520.0 L675.0 523.6 L674.9 527.2 L674.4 530.8 L673.7 534.3 L672.6 537.8 L671.2 541.2 L669.5 544.5 L667.6 547.7 L665.3 550.7 L662.8 553.6"/>
</g>
<ellipse cx="623" cy="392.5" rx="27.5" ry="25.5" fill="url(#sph2)"/><ellipse cx="623" cy="531.5" rx="27.5" ry="25.5" fill="url(#sph2)"/>
</svg><svg style="left:0;top:0" width="1360" height="768" viewBox="0 0 1360 768">
<!-- swooshes -->
<path d="M1309 695 Q1314 678 1322 670 Q1317 680 1312 696 Z" fill="#e8202a"/>
<path d="M1312 697 Q1322 680 1331 670 Q1333 672 1330 675 Q1320 686 1315 698 Z" fill="#2a4a9a"/>
<path d="M1315 699 Q1322 688 1328 684 Q1330 686 1327 688 Q1321 693 1317 700 Z" fill="#f0a020"/>
<!-- red rounded square -->
<rect x="1268" y="687" width="32" height="50" rx="7" fill="#e8202a"/>
<path d="M1297 698 A15 18 0 1 0 1297 726" fill="none" stroke="#fff" stroke-width="6"/>
<path d="M1296 704 A9.5 12 0 1 0 1296 720 L1300 720 V704 Z" fill="#e8202a"/>
<rect x="1286.5" y="687" width="1.3" height="50" fill="#fff" opacity="0.9"/>
<!-- star -->
<path d="M1309 693 L1311 698 L1316 698 L1312 701 L1314 706 L1309 703 L1304 706 L1306 701 L1302 698 L1307 698 Z" fill="#b08a5a"/>
<!-- N -->
<path d="M1303 736 V703 L1318 728 V697 H1324 V736 H1319 L1308 717 V736 Z" fill="#2a4a9a"/>
<!-- C orange -->
<path d="M1350 705 A11 17 0 1 0 1350 728" fill="none" stroke="#f0a020" stroke-width="6"/>
<rect x="1338" y="696" width="1.2" height="40" fill="#fff"/>
<!-- pill -->
<rect x="1268" y="741" width="84" height="14" rx="7" fill="#22408a"/>
<text x="1310" y="753" text-anchor="middle" font-family="Liberation Serif" font-weight="bold" font-size="12.5" fill="#fff" textLength="74" lengthAdjust="spacingAndGlyphs">Khomaucnc.vn</text>
<rect x="1279" y="756" width="62" height="1.5" fill="#c8a070"/>
</svg>
</body></html>
